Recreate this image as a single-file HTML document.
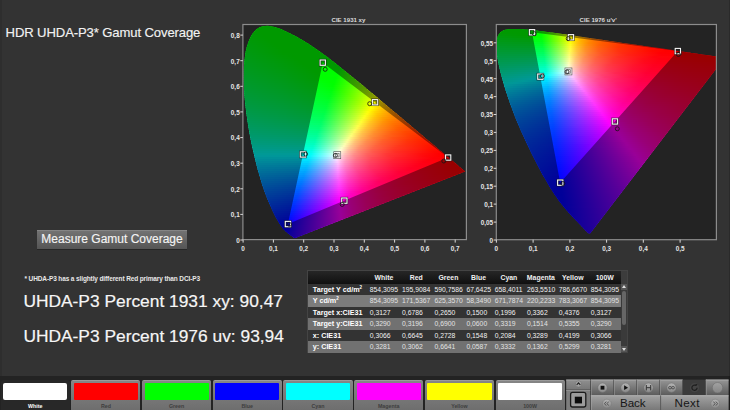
<!DOCTYPE html>
<html lang="en">
<head>
<meta charset="utf-8">
<title>HDR UHDA-P3 Gamut Coverage</title>
<style>
html,body{margin:0;padding:0;}
body{width:730px;height:410px;overflow:hidden;background:#333333;position:relative;font-family:"Liberation Sans",sans-serif;color:#fff;}
.abs{position:absolute;white-space:nowrap;}
.edgeL{left:0;top:0;width:1.5px;height:410px;background:#2e2e2e;}
.edgeR{left:728.5px;top:0;width:1.5px;height:410px;background:#2a2a2a;}
.title{left:5.6px;top:24px;font-size:13.1px;line-height:18px;color:#f2f2f2;letter-spacing:-.12px;-webkit-text-stroke:.15px #f2f2f2;}
.charts{position:absolute;left:0;top:0;}
.charts .ax line{stroke:#d8d8d8;stroke-width:1;}
.charts .ax text{font-family:"Liberation Sans",sans-serif;font-size:6.4px;font-weight:bold;fill:#e6e6e6;}
.charts .ct{font-family:"Liberation Sans",sans-serif;font-size:6.1px;font-weight:bold;fill:#dcdcdc;}
.btn{left:37px;top:230px;width:150px;height:19px;background:linear-gradient(#747474,#555);box-shadow:inset 0 1px 0 #858585,0 1px 0 #262626;text-align:center;font-size:12px;line-height:19px;color:#f4f4f4;-webkit-text-stroke:.15px #f4f4f4;}
.note{left:24.5px;top:273.5px;font-size:6.5px;line-height:10px;font-weight:bold;color:#e8e8e8;letter-spacing:-.12px;}
.big{left:23.4px;font-size:17.36px;line-height:24px;color:#f6f6f6;-webkit-text-stroke:.2px #f6f6f6;}
.b1{top:288.7px;}
.b2{top:324.2px;}
/* table */
.tbl{left:307px;top:270.2px;width:321px;height:82.4px;background:#3c3c3c;border:1px solid #444;box-sizing:border-box;}
.tbl .hd{position:absolute;left:0;top:0;width:313px;height:12.4px;background:linear-gradient(#262626,#101010);}
.tbl .row{position:absolute;left:0;width:313px;height:11.5px;}
.tbl .d{background:#333;}
.tbl .l1{background:#7c7c7c;}
.tbl .l2{background:#717171;}
.tbl span{position:absolute;top:0;font-size:6.8px;line-height:11.5px;color:#f0f0f0;}
.tbl .hd span{font-weight:bold;line-height:13.4px;font-size:6.9px;text-align:center;}
.tbl .row span.lb{left:4.8px;font-weight:bold;font-size:7.2px;color:#fff;}
.tbl .row span.v{text-align:left;}
.tbl .l1 span.v,.tbl .l2 span.v{color:#e2e2e2;}
.tbl sup{font-size:4.5px;line-height:0;vertical-align:3px;}
.sb{position:absolute;left:313px;top:12.4px;width:6px;height:68px;background:#3a3a3a;}
.sb i{position:absolute;left:1px;top:7px;width:4px;height:34px;background:#666;border-radius:2px;}
.sb b{position:absolute;left:0;width:6px;height:6px;background:#555;font-size:0;}
.sb b:after{content:"";position:absolute;left:1px;border:2px solid transparent;}
.sb b.u{top:0;}
.sb b.u:after{top:-1px;border-bottom:3px solid #ddd;}
.sb b.dn{bottom:0;}
.sb b.dn:after{top:2px;border-top:3px solid #ddd;}
/* bottom bar */
.bar{left:0;top:376px;width:730px;height:34px;background:#232323;}
.sw{position:absolute;top:3.6px;width:69.2px;height:30px;background:linear-gradient(#858585,#6e6e6e);border-top:1px solid #9a9a9a;box-sizing:border-box;border-radius:2px 2px 0 0;}
.sw i{position:absolute;left:2.6px;top:2.2px;width:64.2px;height:17.6px;display:block;border-radius:1px;}
.sw span{position:absolute;left:0;width:69.2px;top:21px;text-align:center;font-size:5.3px;line-height:8px;color:#3e3e3e;font-weight:bold;}
.sw.sel{background:#282828;border-top-color:#282828;}
.sw.sel i{border-radius:2px;}
.sw.sel span{color:#fff;font-weight:bold;}
.tb{position:absolute;background:linear-gradient(#8a8a8a,#6c6c6c);box-sizing:border-box;border-left:1px solid #9a9a9a;border-top:1px solid #9c9c9c;}
</style>
</head>
<body>
<div class="abs edgeL"></div>
<div class="abs edgeR"></div>
<div class="abs title">HDR UHDA-P3* Gamut Coverage</div>
<svg class="charts" width="730" height="262" viewBox="0 0 730 262">
<rect x="242.9" y="24.5" width="223.5" height="215.1" fill="#232323"/>
<defs>
<clipPath id="ap"><rect x="243.4" y="25" width="223" height="214.6"/></clipPath>
<clipPath id="ah"><path d="M295.3,238.1 295.2,238.1 295.2,238.1 295.1,238.2 295.1,238.2 295,238.2 295,238.2 294.9,238.2 294.9,238.2 294.8,238.2 294.8,238.2 294.7,238.2 294.7,238.2 294.6,238.1 294.5,238.1 294.4,238.1 294.4,238.1 294.3,238 294.2,238 294.2,238 294.1,237.9 294,237.9 293.9,237.8 293.9,237.8 293.8,237.7 293.7,237.6 293.6,237.6 293.5,237.5 293.3,237.4 293.2,237.3 293.1,237.2 292.9,237.1 292.8,237 292.6,236.9 292.5,236.7 292.3,236.6 292.1,236.5 291.9,236.3 291.8,236.2 291.5,236 291.3,235.9 291.1,235.7 290.8,235.5 290.5,235.3 290.2,235.1 289.9,234.9 289.6,234.6 289.3,234.4 289,234.1 288.6,233.9 288.3,233.6 287.9,233.3 287.5,232.9 287,232.6 286.6,232.2 286.1,231.8 285.7,231.4 285.2,230.9 284.7,230.4 284.1,229.8 283.6,229.2 282.9,228.4 282.3,227.6 281.6,226.7 280.9,225.7 280.1,224.6 279.3,223.4 278.5,222 277.6,220.6 276.7,219 275.7,217.2 274.7,215.2 273.6,213.1 272.5,210.7 271.4,208.2 270.2,205.4 268.9,202.4 267.5,199.2 266.1,195.7 264.7,192 263.3,188 261.9,183.7 260.5,179.1 259.1,174.3 257.6,169.2 256.3,163.9 254.9,158.2 253.5,152.3 252.1,146.2 250.8,140 249.6,133.7 248.5,127.4 247.5,120.9 246.5,114.3 245.7,107.8 245,101.5 244.4,95.3 244,89.2 243.7,83.1 243.6,77.3 243.7,71.7 243.9,66.3 244.4,61.1 245,56.2 245.7,51.5 246.7,47.3 247.9,43.4 249.3,39.8 250.8,36.6 252.5,33.8 254.3,31.4 256.2,29.6 258.3,28.1 260.5,27.1 262.7,26.3 265,25.9 267.3,25.7 269.7,25.9 272.2,26.4 274.7,27.1 277.1,27.8 279.6,28.6 282,29.6 284.5,30.7 287,31.9 289.4,33 291.7,34.2 294.1,35.4 296.4,36.6 298.7,37.9 300.9,39.2 303.2,40.6 305.4,41.9 307.7,43.3 309.9,44.8 312.1,46.2 314.3,47.7 316.5,49.2 318.7,50.8 320.9,52.3 323,53.9 325.2,55.5 327.4,57.1 329.6,58.8 331.7,60.4 333.9,62.1 336,63.8 338.2,65.5 340.4,67.2 342.5,68.9 344.7,70.7 346.9,72.4 349,74.2 351.2,75.9 353.4,77.7 355.5,79.5 357.7,81.2 359.9,83 362,84.8 364.2,86.6 366.3,88.4 368.5,90.2 370.6,92 372.8,93.8 374.9,95.6 377.1,97.3 379.2,99.1 381.3,100.9 383.4,102.7 385.5,104.4 387.6,106.2 389.6,107.9 391.7,109.7 393.7,111.4 395.8,113.1 397.8,114.8 399.8,116.5 401.8,118.1 403.7,119.8 405.7,121.4 407.6,123 409.5,124.6 411.3,126.2 413.2,127.7 415,129.3 416.8,130.8 418.5,132.2 420.3,133.7 421.9,135.1 423.6,136.5 425.2,137.9 426.7,139.2 428.2,140.4 429.7,141.6 431.1,142.8 432.5,144 433.8,145.1 435.2,146.3 436.5,147.3 437.7,148.4 438.9,149.4 440.1,150.4 441.2,151.3 442.2,152.2 443.3,153 444.2,153.9 445.2,154.7 446.1,155.4 446.9,156.2 447.8,156.9 448.6,157.5 449.3,158.2 450,158.8 450.7,159.4 451.4,159.9 452,160.4 452.6,161 453.2,161.4 453.8,161.9 454.3,162.3 454.8,162.7 455.2,163.1 455.7,163.5 456.1,163.8 456.5,164.2 457,164.6 457.6,165.1 458.3,165.7 459,166.4 459.7,166.9 460.4,167.5 460.9,167.9 461.3,168.3 461.8,168.6 462.1,168.9 462.5,169.2 462.8,169.5 463,169.7 463.2,169.9 463.4,170 463.7,170.3 464,170.5 464.3,170.8 464.6,171.1 464.9,171.3 465.1,171.5Z"/></clipPath>
<linearGradient id="ag0" gradientUnits="userSpaceOnUse" x1="259" x2="276"><stop offset="0" stop-color="#0f0"/><stop offset="1" stop-color="#0f0"/></linearGradient>
<linearGradient id="ag1" gradientUnits="userSpaceOnUse" x1="256" x2="282"><stop offset="0" stop-color="#0f0"/><stop offset="1" stop-color="#0f0"/></linearGradient>
<linearGradient id="ag2" gradientUnits="userSpaceOnUse" x1="253" x2="287"><stop offset="0" stop-color="#0f0"/><stop offset="1" stop-color="#0f0"/></linearGradient>
<linearGradient id="ag3" gradientUnits="userSpaceOnUse" x1="252" x2="291"><stop offset="0" stop-color="#00ff01"/><stop offset="1" stop-color="#0f0"/></linearGradient>
<linearGradient id="ag4" gradientUnits="userSpaceOnUse" x1="250" x2="295"><stop offset="0" stop-color="#00ff05"/><stop offset="0.333" stop-color="#0f0"/><stop offset="1" stop-color="#0f0"/></linearGradient>
<linearGradient id="ag5" gradientUnits="userSpaceOnUse" x1="249" x2="299"><stop offset="0" stop-color="#00ff09"/><stop offset="0.32" stop-color="#0f0"/><stop offset="1" stop-color="#0f0"/></linearGradient>
<linearGradient id="ag6" gradientUnits="userSpaceOnUse" x1="248" x2="302"><stop offset="0" stop-color="#00ff0c"/><stop offset="0.352" stop-color="#0f0"/><stop offset="1" stop-color="#0f0"/></linearGradient>
<linearGradient id="ag7" gradientUnits="userSpaceOnUse" x1="247" x2="305"><stop offset="0" stop-color="#00ff0f"/><stop offset="0.397" stop-color="#0f0"/><stop offset="1" stop-color="#0f0"/></linearGradient>
<linearGradient id="ag8" gradientUnits="userSpaceOnUse" x1="247" x2="309"><stop offset="0" stop-color="#0f1"/><stop offset="0.419" stop-color="#0f0"/><stop offset="1" stop-color="#0f0"/></linearGradient>
<linearGradient id="ag9" gradientUnits="userSpaceOnUse" x1="246" x2="312"><stop offset="0" stop-color="#00ff14"/><stop offset="0.455" stop-color="#0f0"/><stop offset="1" stop-color="#0f0"/></linearGradient>
<linearGradient id="ag10" gradientUnits="userSpaceOnUse" x1="245" x2="315"><stop offset="0" stop-color="#00ff17"/><stop offset="0.471" stop-color="#0f0"/><stop offset="1" stop-color="#0f0"/></linearGradient>
<linearGradient id="ag11" gradientUnits="userSpaceOnUse" x1="245" x2="318"><stop offset="0" stop-color="#00ff19"/><stop offset="0.493" stop-color="#0f0"/><stop offset="1" stop-color="#0f0"/></linearGradient>
<linearGradient id="ag12" gradientUnits="userSpaceOnUse" x1="244" x2="320"><stop offset="0" stop-color="#00ff1c"/><stop offset="0.526" stop-color="#0f0"/><stop offset="1" stop-color="#0f0"/></linearGradient>
<linearGradient id="ag13" gradientUnits="userSpaceOnUse" x1="244" x2="323"><stop offset="0" stop-color="#00ff1e"/><stop offset="0.506" stop-color="#0f0"/><stop offset="1" stop-color="#0f0"/></linearGradient>
<linearGradient id="ag14" gradientUnits="userSpaceOnUse" x1="244" x2="326"><stop offset="0" stop-color="#00ff21"/><stop offset="0.488" stop-color="#00ff02"/><stop offset="0.976" stop-color="#0f0"/><stop offset="1" stop-color="#0f0"/></linearGradient>
<linearGradient id="ag15" gradientUnits="userSpaceOnUse" x1="243" x2="329"><stop offset="0" stop-color="#00ff24"/><stop offset="0.465" stop-color="#00ff06"/><stop offset="0.605" stop-color="#0f0"/><stop offset="1" stop-color="#0f0"/></linearGradient>
<linearGradient id="ag16" gradientUnits="userSpaceOnUse" x1="243" x2="331"><stop offset="0" stop-color="#00ff26"/><stop offset="0.455" stop-color="#00ff09"/><stop offset="0.602" stop-color="#0f0"/><stop offset="1" stop-color="#0f0"/></linearGradient>
<linearGradient id="ag17" gradientUnits="userSpaceOnUse" x1="243" x2="334"><stop offset="0" stop-color="#00ff29"/><stop offset="0.44" stop-color="#00ff0c"/><stop offset="0.615" stop-color="#0f0"/><stop offset="1" stop-color="#0f0"/></linearGradient>
<linearGradient id="ag18" gradientUnits="userSpaceOnUse" x1="243" x2="337"><stop offset="0" stop-color="#00ff2b"/><stop offset="0.426" stop-color="#00ff0f"/><stop offset="0.628" stop-color="#0f0"/><stop offset="1" stop-color="#0f0"/></linearGradient>
<linearGradient id="ag19" gradientUnits="userSpaceOnUse" x1="243" x2="339"><stop offset="0" stop-color="#00ff2e"/><stop offset="0.417" stop-color="#00ff12"/><stop offset="0.635" stop-color="#0f0"/><stop offset="1" stop-color="#0f0"/></linearGradient>
<linearGradient id="ag20" gradientUnits="userSpaceOnUse" x1="242.9" x2="342"><stop offset="0" stop-color="#00ff30"/><stop offset="0.404" stop-color="#00ff14"/><stop offset="0.646" stop-color="#0f0"/><stop offset="0.979" stop-color="#0f0"/><stop offset="1" stop-color="#0aff00"/></linearGradient>
<linearGradient id="ag21" gradientUnits="userSpaceOnUse" x1="242.9" x2="344"><stop offset="0" stop-color="#0f3"/><stop offset="0.396" stop-color="#00ff17"/><stop offset="0.663" stop-color="#0f0"/><stop offset="0.95" stop-color="#0f0"/><stop offset="1" stop-color="#15ff00"/></linearGradient>
<linearGradient id="ag22" gradientUnits="userSpaceOnUse" x1="242.9" x2="347"><stop offset="0" stop-color="#00ff36"/><stop offset="0.384" stop-color="#00ff1a"/><stop offset="0.672" stop-color="#0f0"/><stop offset="0.922" stop-color="#02ff00"/><stop offset="1" stop-color="#24ff00"/></linearGradient>
<linearGradient id="ag23" gradientUnits="userSpaceOnUse" x1="242.9" x2="349"><stop offset="0" stop-color="#00ff38"/><stop offset="0.377" stop-color="#00ff1d"/><stop offset="0.688" stop-color="#0f0"/><stop offset="0.895" stop-color="#0f0"/><stop offset="1" stop-color="#2fff00"/></linearGradient>
<linearGradient id="ag24" gradientUnits="userSpaceOnUse" x1="242.9" x2="352"><stop offset="0" stop-color="#00ff3b"/><stop offset="0.367" stop-color="#00ff20"/><stop offset="0.697" stop-color="#0f0"/><stop offset="0.862" stop-color="#0f0"/><stop offset="1" stop-color="#3fff00"/></linearGradient>
<linearGradient id="ag25" gradientUnits="userSpaceOnUse" x1="242.9" x2="354"><stop offset="0" stop-color="#00ff3e"/><stop offset="0.36" stop-color="#00ff23"/><stop offset="0.711" stop-color="#0f0"/><stop offset="0.846" stop-color="#02ff00"/><stop offset="1" stop-color="#4bff00"/></linearGradient>
<linearGradient id="ag26" gradientUnits="userSpaceOnUse" x1="242.9" x2="356"><stop offset="0" stop-color="#00ff41"/><stop offset="0.354" stop-color="#00ff26"/><stop offset="0.707" stop-color="#0f0"/><stop offset="0.822" stop-color="#0f0"/><stop offset="1" stop-color="#57ff00"/></linearGradient>
<linearGradient id="ag27" gradientUnits="userSpaceOnUse" x1="242.9" x2="359"><stop offset="0" stop-color="#0f4"/><stop offset="0.345" stop-color="#00ff29"/><stop offset="0.689" stop-color="#00ff03"/><stop offset="0.792" stop-color="#0f0"/><stop offset="1" stop-color="#68ff00"/></linearGradient>
<linearGradient id="ag28" gradientUnits="userSpaceOnUse" x1="242.9" x2="361"><stop offset="0" stop-color="#00ff47"/><stop offset="0.339" stop-color="#00ff2c"/><stop offset="0.677" stop-color="#00ff07"/><stop offset="0.745" stop-color="#0f0"/><stop offset="0.779" stop-color="#02ff00"/><stop offset="1" stop-color="#75ff00"/></linearGradient>
<linearGradient id="ag29" gradientUnits="userSpaceOnUse" x1="242.9" x2="364"><stop offset="0" stop-color="#00ff4a"/><stop offset="0.33" stop-color="#00ff30"/><stop offset="0.661" stop-color="#00ff0b"/><stop offset="0.751" stop-color="#0f0"/><stop offset="1" stop-color="#87ff00"/></linearGradient>
<linearGradient id="ag30" gradientUnits="userSpaceOnUse" x1="242.9" x2="366"><stop offset="0" stop-color="#00ff4d"/><stop offset="0.325" stop-color="#0f3"/><stop offset="0.65" stop-color="#00ff0e"/><stop offset="0.731" stop-color="#00ff02"/><stop offset="1" stop-color="#96ff00"/></linearGradient>
<linearGradient id="ag31" gradientUnits="userSpaceOnUse" x1="242.9" x2="369"><stop offset="0" stop-color="#00ff50"/><stop offset="0.317" stop-color="#00ff36"/><stop offset="0.634" stop-color="#00ff12"/><stop offset="0.714" stop-color="#02ff06"/><stop offset="0.777" stop-color="#28ff00"/><stop offset="1" stop-color="#af0"/></linearGradient>
<linearGradient id="ag32" gradientUnits="userSpaceOnUse" x1="243" x2="371"><stop offset="0" stop-color="#00ff53"/><stop offset="0.312" stop-color="#00ff3a"/><stop offset="0.625" stop-color="#00ff16"/><stop offset="0.695" stop-color="#00ff0b"/><stop offset="0.773" stop-color="#31ff00"/><stop offset="1" stop-color="#baff00"/></linearGradient>
<linearGradient id="ag33" gradientUnits="userSpaceOnUse" x1="243" x2="373"><stop offset="0" stop-color="#00ff56"/><stop offset="0.308" stop-color="#00ff3d"/><stop offset="0.615" stop-color="#00ff1a"/><stop offset="0.677" stop-color="#0f1"/><stop offset="0.785" stop-color="#42ff00"/><stop offset="1" stop-color="#cbff00"/></linearGradient>
<linearGradient id="ag34" gradientUnits="userSpaceOnUse" x1="243" x2="376"><stop offset="0" stop-color="#00ff5a"/><stop offset="0.301" stop-color="#00ff41"/><stop offset="0.602" stop-color="#00ff1e"/><stop offset="0.662" stop-color="#02ff15"/><stop offset="0.789" stop-color="#54ff00"/><stop offset="1" stop-color="#e3ff00"/></linearGradient>
<linearGradient id="ag35" gradientUnits="userSpaceOnUse" x1="243" x2="378"><stop offset="0" stop-color="#00ff5d"/><stop offset="0.296" stop-color="#00ff45"/><stop offset="0.593" stop-color="#0f2"/><stop offset="0.644" stop-color="#00ff1a"/><stop offset="0.8" stop-color="#67ff00"/><stop offset="0.993" stop-color="#f0ff00"/><stop offset="1" stop-color="#f6ff00"/></linearGradient>
<linearGradient id="ag36" gradientUnits="userSpaceOnUse" x1="243" x2="381"><stop offset="0" stop-color="#00ff61"/><stop offset="0.29" stop-color="#00ff48"/><stop offset="0.58" stop-color="#00ff26"/><stop offset="0.623" stop-color="#00ff1f"/><stop offset="0.804" stop-color="#7bff00"/><stop offset="0.978" stop-color="#feff00"/><stop offset="1" stop-color="#ffef00"/></linearGradient>
<linearGradient id="ag37" gradientUnits="userSpaceOnUse" x1="243" x2="383"><stop offset="0" stop-color="#00ff64"/><stop offset="0.286" stop-color="#00ff4c"/><stop offset="0.571" stop-color="#00ff2a"/><stop offset="0.614" stop-color="#02ff24"/><stop offset="0.814" stop-color="#90ff00"/><stop offset="0.957" stop-color="#fffd00"/><stop offset="1" stop-color="#fd0"/></linearGradient>
<linearGradient id="ag38" gradientUnits="userSpaceOnUse" x1="243" x2="385"><stop offset="0" stop-color="#00ff68"/><stop offset="0.282" stop-color="#00ff50"/><stop offset="0.563" stop-color="#00ff2f"/><stop offset="0.599" stop-color="#00ff29"/><stop offset="0.824" stop-color="#a6ff00"/><stop offset="0.93" stop-color="#fdff00"/><stop offset="1" stop-color="#ffcd00"/></linearGradient>
<linearGradient id="ag39" gradientUnits="userSpaceOnUse" x1="244" x2="388"><stop offset="0" stop-color="#00ff6b"/><stop offset="0.278" stop-color="#00ff54"/><stop offset="0.556" stop-color="#00ff32"/><stop offset="0.576" stop-color="#00ff2f"/><stop offset="0.799" stop-color="#a7ff03"/><stop offset="0.903" stop-color="#fffe00"/><stop offset="0.979" stop-color="#ffc600"/><stop offset="1" stop-color="#ffba00"/></linearGradient>
<linearGradient id="ag40" gradientUnits="userSpaceOnUse" x1="244" x2="390"><stop offset="0" stop-color="#00ff6f"/><stop offset="0.274" stop-color="#00ff58"/><stop offset="0.548" stop-color="#00ff37"/><stop offset="0.568" stop-color="#02ff33"/><stop offset="0.795" stop-color="#b4ff07"/><stop offset="0.836" stop-color="#d7ff00"/><stop offset="0.877" stop-color="#fcff00"/><stop offset="0.966" stop-color="#ffbf00"/><stop offset="1" stop-color="#ffac00"/></linearGradient>
<linearGradient id="ag41" gradientUnits="userSpaceOnUse" x1="244" x2="392"><stop offset="0" stop-color="#00ff73"/><stop offset="0.27" stop-color="#00ff5c"/><stop offset="0.541" stop-color="#00ff3b"/><stop offset="0.554" stop-color="#00ff39"/><stop offset="0.791" stop-color="#c1ff0b"/><stop offset="0.845" stop-color="#f2ff00"/><stop offset="0.858" stop-color="#ff0"/><stop offset="0.932" stop-color="#ffc500"/><stop offset="1" stop-color="#ffa000"/></linearGradient>
<linearGradient id="ag42" gradientUnits="userSpaceOnUse" x1="244" x2="395"><stop offset="0" stop-color="#0f7"/><stop offset="0.265" stop-color="#00ff61"/><stop offset="0.53" stop-color="#00ff40"/><stop offset="0.543" stop-color="#04ff3e"/><stop offset="0.775" stop-color="#c9ff11"/><stop offset="0.834" stop-color="#fffc00"/><stop offset="0.907" stop-color="#ffc200"/><stop offset="1" stop-color="#ff9100"/></linearGradient>
<linearGradient id="ag43" gradientUnits="userSpaceOnUse" x1="245" x2="397"><stop offset="0" stop-color="#00ff7b"/><stop offset="0.263" stop-color="#00ff65"/><stop offset="0.526" stop-color="#02ff44"/><stop offset="0.757" stop-color="#caff18"/><stop offset="0.809" stop-color="#feff0a"/><stop offset="0.855" stop-color="#ffd700"/><stop offset="0.941" stop-color="#ffa100"/><stop offset="1" stop-color="#ff8700"/></linearGradient>
<linearGradient id="ag44" gradientUnits="userSpaceOnUse" x1="245" x2="400"><stop offset="0" stop-color="#00ff80"/><stop offset="0.258" stop-color="#00ff69"/><stop offset="0.51" stop-color="#00ff4b"/><stop offset="0.735" stop-color="#ccff20"/><stop offset="0.787" stop-color="#fffd12"/><stop offset="0.852" stop-color="#ffc500"/><stop offset="0.942" stop-color="#ff9200"/><stop offset="1" stop-color="#ff7a00"/></linearGradient>
<linearGradient id="ag45" gradientUnits="userSpaceOnUse" x1="245" x2="402"><stop offset="0" stop-color="#00ff84"/><stop offset="0.255" stop-color="#00ff6e"/><stop offset="0.497" stop-color="#00ff51"/><stop offset="0.701" stop-color="#bbff2c"/><stop offset="0.764" stop-color="#fdff1c"/><stop offset="0.841" stop-color="#ffbe03"/><stop offset="0.936" stop-color="#ff8a00"/><stop offset="1" stop-color="#ff7100"/></linearGradient>
<linearGradient id="ag46" gradientUnits="userSpaceOnUse" x1="245" x2="404"><stop offset="0" stop-color="#00ff89"/><stop offset="0.252" stop-color="#00ff73"/><stop offset="0.491" stop-color="#02ff56"/><stop offset="0.698" stop-color="#c9ff30"/><stop offset="0.748" stop-color="#fffe24"/><stop offset="0.811" stop-color="#ffc40e"/><stop offset="0.868" stop-color="#ffa000"/><stop offset="0.981" stop-color="#ff6f00"/><stop offset="1" stop-color="#ff6900"/></linearGradient>
<linearGradient id="ag47" gradientUnits="userSpaceOnUse" x1="246" x2="407"><stop offset="0" stop-color="#00ff8d"/><stop offset="0.248" stop-color="#00ff78"/><stop offset="0.472" stop-color="#00ff5d"/><stop offset="0.677" stop-color="#cbff38"/><stop offset="0.72" stop-color="#fcff2e"/><stop offset="0.795" stop-color="#ffbd12"/><stop offset="0.87" stop-color="#ff9000"/><stop offset="0.994" stop-color="#ff6000"/><stop offset="1" stop-color="#ff5f00"/></linearGradient>
<linearGradient id="ag48" gradientUnits="userSpaceOnUse" x1="246" x2="409"><stop offset="0" stop-color="#00ff92"/><stop offset="0.245" stop-color="#00ff7d"/><stop offset="0.46" stop-color="#00ff64"/><stop offset="0.644" stop-color="#b9ff44"/><stop offset="0.706" stop-color="#ffff36"/><stop offset="0.761" stop-color="#ffc81f"/><stop offset="0.84" stop-color="#ff9407"/><stop offset="0.89" stop-color="#ff7d00"/><stop offset="1" stop-color="#ff5700"/></linearGradient>
<linearGradient id="ag49" gradientUnits="userSpaceOnUse" x1="246" x2="411"><stop offset="0" stop-color="#00ff97"/><stop offset="0.242" stop-color="#00ff83"/><stop offset="0.455" stop-color="#02ff6a"/><stop offset="0.642" stop-color="#c8ff4a"/><stop offset="0.691" stop-color="#fffc3e"/><stop offset="0.745" stop-color="#ffc526"/><stop offset="0.824" stop-color="#ff910d"/><stop offset="0.891" stop-color="#ff7300"/><stop offset="1" stop-color="#ff5000"/></linearGradient>
<linearGradient id="ag50" gradientUnits="userSpaceOnUse" x1="247" x2="414"><stop offset="0" stop-color="#00ff9b"/><stop offset="0.24" stop-color="#0f8"/><stop offset="0.437" stop-color="#00ff72"/><stop offset="0.623" stop-color="#caff52"/><stop offset="0.665" stop-color="#feff49"/><stop offset="0.725" stop-color="#ffc22c"/><stop offset="0.802" stop-color="#ff8e13"/><stop offset="0.892" stop-color="#ff6700"/><stop offset="1" stop-color="#ff4700"/></linearGradient>
<linearGradient id="ag51" gradientUnits="userSpaceOnUse" x1="247" x2="416"><stop offset="0" stop-color="#00ffa1"/><stop offset="0.237" stop-color="#00ff8e"/><stop offset="0.426" stop-color="#00ff79"/><stop offset="0.592" stop-color="#b7ff5f"/><stop offset="0.651" stop-color="#fffc51"/><stop offset="0.704" stop-color="#ffc435"/><stop offset="0.781" stop-color="#ff8e1a"/><stop offset="0.893" stop-color="#ff5e00"/><stop offset="1" stop-color="#ff4100"/></linearGradient>
<linearGradient id="ag52" gradientUnits="userSpaceOnUse" x1="247" x2="419"><stop offset="0" stop-color="#00ffa6"/><stop offset="0.233" stop-color="#00ff95"/><stop offset="0.419" stop-color="#01ff80"/><stop offset="0.587" stop-color="#c7ff65"/><stop offset="0.628" stop-color="#fdff5d"/><stop offset="0.686" stop-color="#ffc03c"/><stop offset="0.762" stop-color="#ff8b1f"/><stop offset="0.872" stop-color="#ff5c03"/><stop offset="1" stop-color="#ff3a00"/></linearGradient>
<linearGradient id="ag53" gradientUnits="userSpaceOnUse" x1="248" x2="421"><stop offset="0" stop-color="#00ffab"/><stop offset="0.231" stop-color="#00ff9b"/><stop offset="0.405" stop-color="#0f8"/><stop offset="0.566" stop-color="#c2ff70"/><stop offset="0.613" stop-color="#fffd66"/><stop offset="0.659" stop-color="#ffc848"/><stop offset="0.728" stop-color="#ff932a"/><stop offset="0.827" stop-color="#ff630f"/><stop offset="0.908" stop-color="#ff4900"/><stop offset="1" stop-color="#ff3400"/></linearGradient>
<linearGradient id="ag54" gradientUnits="userSpaceOnUse" x1="248" x2="423"><stop offset="0" stop-color="#00ffb1"/><stop offset="0.229" stop-color="#00ffa1"/><stop offset="0.394" stop-color="#00ff91"/><stop offset="0.543" stop-color="#b5ff7b"/><stop offset="0.594" stop-color="#fcff72"/><stop offset="0.651" stop-color="#ffbf4c"/><stop offset="0.72" stop-color="#ff8c2e"/><stop offset="0.823" stop-color="#ff5c11"/><stop offset="0.914" stop-color="#ff4100"/><stop offset="1" stop-color="#ff2e00"/></linearGradient>
<linearGradient id="ag55" gradientUnits="userSpaceOnUse" x1="248" x2="426"><stop offset="0" stop-color="#00ffb7"/><stop offset="0.225" stop-color="#00ffa8"/><stop offset="0.388" stop-color="#01ff99"/><stop offset="0.545" stop-color="#ceff82"/><stop offset="0.579" stop-color="#ffff7c"/><stop offset="0.624" stop-color="#ffc75a"/><stop offset="0.685" stop-color="#ff943a"/><stop offset="0.775" stop-color="#ff651c"/><stop offset="0.916" stop-color="#ff3900"/><stop offset="1" stop-color="#ff2800"/></linearGradient>
<linearGradient id="ag56" gradientUnits="userSpaceOnUse" x1="249" x2="428"><stop offset="0" stop-color="#00ffbd"/><stop offset="0.223" stop-color="#00ffaf"/><stop offset="0.374" stop-color="#00ffa2"/><stop offset="0.52" stop-color="#c0ff8f"/><stop offset="0.559" stop-color="#faff88"/><stop offset="0.575" stop-color="#ffeb7b"/><stop offset="0.626" stop-color="#ffb356"/><stop offset="0.698" stop-color="#ff7f34"/><stop offset="0.804" stop-color="#ff5115"/><stop offset="0.922" stop-color="#ff3200"/><stop offset="1" stop-color="#f20"/></linearGradient>
<linearGradient id="ag57" gradientUnits="userSpaceOnUse" x1="249" x2="430"><stop offset="0" stop-color="#00ffc4"/><stop offset="0.221" stop-color="#00ffb7"/><stop offset="0.365" stop-color="#00ffab"/><stop offset="0.464" stop-color="#83ffa0"/><stop offset="0.547" stop-color="#feff94"/><stop offset="0.591" stop-color="#ffc56c"/><stop offset="0.652" stop-color="#ff9148"/><stop offset="0.74" stop-color="#ff6127"/><stop offset="0.873" stop-color="#ff3708"/><stop offset="0.939" stop-color="#ff2800"/><stop offset="1" stop-color="#ff1d00"/></linearGradient>
<linearGradient id="ag58" gradientUnits="userSpaceOnUse" x1="250" x2="433"><stop offset="0" stop-color="#00ffca"/><stop offset="0.219" stop-color="#00ffbf"/><stop offset="0.355" stop-color="#01ffb4"/><stop offset="0.497" stop-color="#cdffa4"/><stop offset="0.53" stop-color="#fffc9e"/><stop offset="0.574" stop-color="#ffc174"/><stop offset="0.634" stop-color="#ff8d4e"/><stop offset="0.721" stop-color="#ff5e2c"/><stop offset="0.858" stop-color="#ff330b"/><stop offset="0.934" stop-color="#ff2300"/><stop offset="1" stop-color="#ff1800"/></linearGradient>
<linearGradient id="ag59" gradientUnits="userSpaceOnUse" x1="250" x2="435"><stop offset="0" stop-color="#00ffd1"/><stop offset="0.216" stop-color="#00ffc7"/><stop offset="0.346" stop-color="#00ffbe"/><stop offset="0.476" stop-color="#beffb1"/><stop offset="0.514" stop-color="#fdffad"/><stop offset="0.562" stop-color="#ffbe7b"/><stop offset="0.622" stop-color="#ff8a54"/><stop offset="0.708" stop-color="#ff5b30"/><stop offset="0.843" stop-color="#ff310f"/><stop offset="0.941" stop-color="#ff1d00"/><stop offset="1" stop-color="#ff1300"/></linearGradient>
<linearGradient id="ag60" gradientUnits="userSpaceOnUse" x1="250" x2="438"><stop offset="0" stop-color="#00ffd9"/><stop offset="0.213" stop-color="#00ffd0"/><stop offset="0.335" stop-color="#00ffc9"/><stop offset="0.351" stop-color="#15ffc7"/><stop offset="0.463" stop-color="#c0ffbe"/><stop offset="0.5" stop-color="#fffdb8"/><stop offset="0.537" stop-color="#ffc68d"/><stop offset="0.59" stop-color="#ff9263"/><stop offset="0.67" stop-color="#ff623d"/><stop offset="0.793" stop-color="#ff3619"/><stop offset="0.936" stop-color="#ff1800"/><stop offset="1" stop-color="#ff0d00"/></linearGradient>
<linearGradient id="ag61" gradientUnits="userSpaceOnUse" x1="251" x2="440"><stop offset="0" stop-color="#00ffe0"/><stop offset="0.212" stop-color="#00ffd9"/><stop offset="0.328" stop-color="#01ffd3"/><stop offset="0.455" stop-color="#ccffca"/><stop offset="0.481" stop-color="#fbffc8"/><stop offset="0.519" stop-color="#ffc99a"/><stop offset="0.571" stop-color="#ff936d"/><stop offset="0.646" stop-color="#ff6446"/><stop offset="0.762" stop-color="#ff3821"/><stop offset="0.942" stop-color="#ff1200"/><stop offset="1" stop-color="#ff0900"/></linearGradient>
<linearGradient id="ag62" gradientUnits="userSpaceOnUse" x1="251" x2="442"><stop offset="0" stop-color="#00ffe8"/><stop offset="0.209" stop-color="#00ffe3"/><stop offset="0.319" stop-color="#00ffdf"/><stop offset="0.435" stop-color="#bcffd9"/><stop offset="0.471" stop-color="#fffed6"/><stop offset="0.508" stop-color="#ffc4a3"/><stop offset="0.56" stop-color="#ff8f74"/><stop offset="0.634" stop-color="#ff604b"/><stop offset="0.749" stop-color="#ff3524"/><stop offset="0.942" stop-color="#ff0d00"/><stop offset="1" stop-color="#ff0400"/></linearGradient>
<linearGradient id="ag63" gradientUnits="userSpaceOnUse" x1="252" x2="445"><stop offset="0" stop-color="#00fff0"/><stop offset="0.207" stop-color="#00ffed"/><stop offset="0.306" stop-color="#00ffeb"/><stop offset="0.316" stop-color="#0effea"/><stop offset="0.42" stop-color="#beffe7"/><stop offset="0.451" stop-color="#faffe6"/><stop offset="0.461" stop-color="#fff0d8"/><stop offset="0.497" stop-color="#ffbaa6"/><stop offset="0.549" stop-color="#ff8777"/><stop offset="0.627" stop-color="#ff584b"/><stop offset="0.746" stop-color="#ff2e24"/><stop offset="0.943" stop-color="#ff0700"/><stop offset="1" stop-color="#f00"/></linearGradient>
<linearGradient id="ag64" gradientUnits="userSpaceOnUse" x1="252" x2="447"><stop offset="0" stop-color="#00fff9"/><stop offset="0.205" stop-color="#00fff8"/><stop offset="0.303" stop-color="#00fff7"/><stop offset="0.415" stop-color="#cafff6"/><stop offset="0.441" stop-color="#fefff6"/><stop offset="0.477" stop-color="#ffc3bb"/><stop offset="0.523" stop-color="#ff908a"/><stop offset="0.59" stop-color="#ff625d"/><stop offset="0.692" stop-color="#ff3734"/><stop offset="0.867" stop-color="#ff0f0c"/><stop offset="0.959" stop-color="#f00"/><stop offset="1" stop-color="#f00"/></linearGradient>
<linearGradient id="ag65" gradientUnits="userSpaceOnUse" x1="253" x2="449"><stop offset="0" stop-color="#00fcff"/><stop offset="0.204" stop-color="#00fbff"/><stop offset="0.291" stop-color="#00faff"/><stop offset="0.398" stop-color="#bef8ff"/><stop offset="0.429" stop-color="#fcf8ff"/><stop offset="0.469" stop-color="#ffb7bd"/><stop offset="0.515" stop-color="#ff878c"/><stop offset="0.587" stop-color="#ff595d"/><stop offset="0.694" stop-color="#ff3033"/><stop offset="0.878" stop-color="#ff080b"/><stop offset="0.949" stop-color="#f00"/><stop offset="1" stop-color="#f00"/></linearGradient>
<linearGradient id="ag66" gradientUnits="userSpaceOnUse" x1="253" x2="452"><stop offset="0" stop-color="#00f3ff"/><stop offset="0.201" stop-color="#00efff"/><stop offset="0.281" stop-color="#00edff"/><stop offset="0.291" stop-color="#0eedff"/><stop offset="0.392" stop-color="#bfe9ff"/><stop offset="0.422" stop-color="#fbe8ff"/><stop offset="0.437" stop-color="#ffd0e6"/><stop offset="0.472" stop-color="#ffa1b3"/><stop offset="0.523" stop-color="#ff7483"/><stop offset="0.598" stop-color="#ff4955"/><stop offset="0.719" stop-color="#ff222b"/><stop offset="0.905" stop-color="#ff0007"/><stop offset="0.98" stop-color="#f00"/><stop offset="1" stop-color="#f00"/></linearGradient>
<linearGradient id="ag67" gradientUnits="userSpaceOnUse" x1="254" x2="454"><stop offset="0" stop-color="#00eaff"/><stop offset="0.2" stop-color="#00e4ff"/><stop offset="0.275" stop-color="#00e1ff"/><stop offset="0.39" stop-color="#c9daff"/><stop offset="0.415" stop-color="#fad9ff"/><stop offset="0.425" stop-color="#ffccf1"/><stop offset="0.46" stop-color="#ff9cbb"/><stop offset="0.51" stop-color="#ff7089"/><stop offset="0.585" stop-color="#ff465a"/><stop offset="0.7" stop-color="#ff2030"/><stop offset="0.87" stop-color="#ff000d"/><stop offset="0.975" stop-color="#f00"/><stop offset="1" stop-color="#f00"/></linearGradient>
<linearGradient id="ag68" gradientUnits="userSpaceOnUse" x1="254" x2="457"><stop offset="0" stop-color="#00e2ff"/><stop offset="0.197" stop-color="#00daff"/><stop offset="0.266" stop-color="#00d6ff"/><stop offset="0.379" stop-color="#c0cdff"/><stop offset="0.409" stop-color="#f9caff"/><stop offset="0.414" stop-color="#ffc7fb"/><stop offset="0.448" stop-color="#ff98c4"/><stop offset="0.498" stop-color="#ff6c90"/><stop offset="0.567" stop-color="#ff4562"/><stop offset="0.675" stop-color="#ff2037"/><stop offset="0.837" stop-color="#ff0012"/><stop offset="0.97" stop-color="#f00"/><stop offset="1" stop-color="#f00"/></linearGradient>
<linearGradient id="ag69" gradientUnits="userSpaceOnUse" x1="255" x2="459"><stop offset="0" stop-color="#00d9ff"/><stop offset="0.196" stop-color="#00cfff"/><stop offset="0.255" stop-color="#00cbff"/><stop offset="0.265" stop-color="#0ccaff"/><stop offset="0.373" stop-color="#c1c0ff"/><stop offset="0.407" stop-color="#ffbafc"/><stop offset="0.441" stop-color="#ff8ec6"/><stop offset="0.49" stop-color="#ff6492"/><stop offset="0.564" stop-color="#ff3d62"/><stop offset="0.676" stop-color="#ff1936"/><stop offset="0.809" stop-color="#ff0018"/><stop offset="0.975" stop-color="#f00"/><stop offset="1" stop-color="#f00"/></linearGradient>
<linearGradient id="ag70" gradientUnits="userSpaceOnUse" x1="255" x2="461"><stop offset="0" stop-color="#00d1ff"/><stop offset="0.194" stop-color="#00c5ff"/><stop offset="0.252" stop-color="#00c0ff"/><stop offset="0.374" stop-color="#cab2ff"/><stop offset="0.403" stop-color="#ffadfe"/><stop offset="0.437" stop-color="#ff84c8"/><stop offset="0.485" stop-color="#ff5d94"/><stop offset="0.558" stop-color="#ff3764"/><stop offset="0.67" stop-color="#ff1538"/><stop offset="0.782" stop-color="#ff001d"/><stop offset="0.976" stop-color="#f00"/><stop offset="1" stop-color="#f00"/></linearGradient>
<linearGradient id="ag71" gradientUnits="userSpaceOnUse" x1="256" x2="464"><stop offset="0" stop-color="#00c9ff"/><stop offset="0.192" stop-color="#0bf"/><stop offset="0.24" stop-color="#00b6ff"/><stop offset="0.356" stop-color="#b9a8ff"/><stop offset="0.394" stop-color="#ffa1ff"/><stop offset="0.428" stop-color="#ff7ac9"/><stop offset="0.476" stop-color="#ff5596"/><stop offset="0.548" stop-color="#ff3266"/><stop offset="0.659" stop-color="#ff103a"/><stop offset="0.745" stop-color="#ff0024"/><stop offset="0.938" stop-color="#ff0004"/><stop offset="1" stop-color="#f00"/></linearGradient>
<linearGradient id="ag72" gradientUnits="userSpaceOnUse" x1="256" x2="466"><stop offset="0" stop-color="#00c2ff"/><stop offset="0.19" stop-color="#00b2ff"/><stop offset="0.238" stop-color="#03acff"/><stop offset="0.362" stop-color="#ca9aff"/><stop offset="0.39" stop-color="#fe95ff"/><stop offset="0.429" stop-color="#ff6dc5"/><stop offset="0.481" stop-color="#ff4991"/><stop offset="0.557" stop-color="#ff2761"/><stop offset="0.671" stop-color="#ff0837"/><stop offset="0.724" stop-color="#ff002a"/><stop offset="0.914" stop-color="#ff0008"/><stop offset="1" stop-color="#f00"/></linearGradient>
<linearGradient id="ag73" gradientUnits="userSpaceOnUse" x1="257" x2="466"><stop offset="0" stop-color="#00baff"/><stop offset="0.191" stop-color="#00a8ff"/><stop offset="0.23" stop-color="#00a3ff"/><stop offset="0.359" stop-color="#cb8fff"/><stop offset="0.388" stop-color="#fd89ff"/><stop offset="0.431" stop-color="#ff60c1"/><stop offset="0.483" stop-color="#ff3f8f"/><stop offset="0.56" stop-color="#ff2061"/><stop offset="0.679" stop-color="#ff0136"/><stop offset="0.871" stop-color="#ff0010"/><stop offset="1" stop-color="#f00"/></linearGradient>
<linearGradient id="ag74" gradientUnits="userSpaceOnUse" x1="257" x2="463"><stop offset="0" stop-color="#00b2ff"/><stop offset="0.194" stop-color="#009fff"/><stop offset="0.228" stop-color="#009bff"/><stop offset="0.354" stop-color="#bb86ff"/><stop offset="0.393" stop-color="#fc7eff"/><stop offset="0.442" stop-color="#ff55bd"/><stop offset="0.5" stop-color="#ff348a"/><stop offset="0.587" stop-color="#ff155a"/><stop offset="0.684" stop-color="#ff003a"/><stop offset="0.879" stop-color="#ff0012"/><stop offset="1" stop-color="#ff0001"/></linearGradient>
<linearGradient id="ag75" gradientUnits="userSpaceOnUse" x1="258" x2="458"><stop offset="0" stop-color="#00abff"/><stop offset="0.2" stop-color="#0096ff"/><stop offset="0.23" stop-color="#0392ff"/><stop offset="0.37" stop-color="#cb7aff"/><stop offset="0.4" stop-color="#fc73ff"/><stop offset="0.45" stop-color="#ff4dbf"/><stop offset="0.51" stop-color="#ff2e8c"/><stop offset="0.6" stop-color="#ff105c"/><stop offset="0.68" stop-color="#ff0041"/><stop offset="0.87" stop-color="#ff0019"/><stop offset="1" stop-color="#ff0007"/></linearGradient>
<linearGradient id="ag76" gradientUnits="userSpaceOnUse" x1="258" x2="452"><stop offset="0" stop-color="#00a4ff"/><stop offset="0.206" stop-color="#008dff"/><stop offset="0.232" stop-color="#008aff"/><stop offset="0.381" stop-color="#cb6fff"/><stop offset="0.412" stop-color="#fb68ff"/><stop offset="0.428" stop-color="#ff5dec"/><stop offset="0.474" stop-color="#ff3fb7"/><stop offset="0.541" stop-color="#ff2284"/><stop offset="0.639" stop-color="#ff0657"/><stop offset="0.686" stop-color="#ff0047"/><stop offset="0.871" stop-color="#ff001f"/><stop offset="1" stop-color="#ff000c"/></linearGradient>
<linearGradient id="ag77" gradientUnits="userSpaceOnUse" x1="259" x2="447"><stop offset="0" stop-color="#009cff"/><stop offset="0.213" stop-color="#0084ff"/><stop offset="0.229" stop-color="#0082ff"/><stop offset="0.378" stop-color="#bd68ff"/><stop offset="0.426" stop-color="#ff5cfc"/><stop offset="0.473" stop-color="#ff3dc2"/><stop offset="0.537" stop-color="#ff2290"/><stop offset="0.633" stop-color="#ff0660"/><stop offset="0.681" stop-color="#ff0050"/><stop offset="0.856" stop-color="#ff0027"/><stop offset="1" stop-color="#f01"/></linearGradient>
<linearGradient id="ag78" gradientUnits="userSpaceOnUse" x1="260" x2="442"><stop offset="0" stop-color="#0095ff"/><stop offset="0.22" stop-color="#007bff"/><stop offset="0.231" stop-color="#027aff"/><stop offset="0.396" stop-color="#cc5cff"/><stop offset="0.434" stop-color="#ff52fd"/><stop offset="0.484" stop-color="#ff36c4"/><stop offset="0.549" stop-color="#ff1c92"/><stop offset="0.648" stop-color="#ff0062"/><stop offset="0.802" stop-color="#ff0037"/><stop offset="1" stop-color="#ff0016"/></linearGradient>
<linearGradient id="ag79" gradientUnits="userSpaceOnUse" x1="260" x2="437"><stop offset="0" stop-color="#008eff"/><stop offset="0.226" stop-color="#0074ff"/><stop offset="0.232" stop-color="#0073ff"/><stop offset="0.407" stop-color="#cc53ff"/><stop offset="0.446" stop-color="#ff49fe"/><stop offset="0.497" stop-color="#ff2ec5"/><stop offset="0.571" stop-color="#ff1490"/><stop offset="0.655" stop-color="#ff0068"/><stop offset="0.808" stop-color="#ff003c"/><stop offset="1" stop-color="#ff001c"/></linearGradient>
<linearGradient id="ag80" gradientUnits="userSpaceOnUse" x1="261" x2="432"><stop offset="0" stop-color="#0087ff"/><stop offset="0.228" stop-color="#006cff"/><stop offset="0.404" stop-color="#be4cff"/><stop offset="0.456" stop-color="#ff40ff"/><stop offset="0.509" stop-color="#ff27c7"/><stop offset="0.585" stop-color="#ff0e92"/><stop offset="0.649" stop-color="#ff0073"/><stop offset="0.789" stop-color="#ff0047"/><stop offset="1" stop-color="#ff0021"/></linearGradient>
<linearGradient id="ag81" gradientUnits="userSpaceOnUse" x1="261" x2="427"><stop offset="0" stop-color="#0081ff"/><stop offset="0.235" stop-color="#0264ff"/><stop offset="0.428" stop-color="#cc41ff"/><stop offset="0.47" stop-color="#fe37ff"/><stop offset="0.53" stop-color="#ff1dc3"/><stop offset="0.608" stop-color="#ff0691"/><stop offset="0.657" stop-color="#ff007a"/><stop offset="0.795" stop-color="#ff004e"/><stop offset="1" stop-color="#ff0027"/></linearGradient>
<linearGradient id="ag82" gradientUnits="userSpaceOnUse" x1="262" x2="422"><stop offset="0" stop-color="#007aff"/><stop offset="0.231" stop-color="#005eff"/><stop offset="0.438" stop-color="#cd38ff"/><stop offset="0.481" stop-color="#fe2eff"/><stop offset="0.55" stop-color="#ff14c0"/><stop offset="0.631" stop-color="#ff008f"/><stop offset="0.756" stop-color="#ff0060"/><stop offset="0.95" stop-color="#ff0035"/><stop offset="1" stop-color="#ff002d"/></linearGradient>
<linearGradient id="ag83" gradientUnits="userSpaceOnUse" x1="263" x2="417"><stop offset="0" stop-color="#0073ff"/><stop offset="0.227" stop-color="#0058ff"/><stop offset="0.435" stop-color="#c033ff"/><stop offset="0.494" stop-color="#fd25ff"/><stop offset="0.571" stop-color="#ff0bbd"/><stop offset="0.623" stop-color="#ff009e"/><stop offset="0.74" stop-color="#ff006e"/><stop offset="0.916" stop-color="#ff0042"/><stop offset="1" stop-color="#f03"/></linearGradient>
<linearGradient id="ag84" gradientUnits="userSpaceOnUse" x1="264" x2="412"><stop offset="0" stop-color="#006dff"/><stop offset="0.23" stop-color="#0251ff"/><stop offset="0.459" stop-color="#cd28ff"/><stop offset="0.507" stop-color="#fc1cff"/><stop offset="0.588" stop-color="#ff03bf"/><stop offset="0.689" stop-color="#ff008a"/><stop offset="0.838" stop-color="#ff005b"/><stop offset="1" stop-color="#ff003a"/></linearGradient>
<linearGradient id="ag85" gradientUnits="userSpaceOnUse" x1="264" x2="407"><stop offset="0" stop-color="#0067ff"/><stop offset="0.231" stop-color="#004bff"/><stop offset="0.469" stop-color="#c721ff"/><stop offset="0.531" stop-color="#ff12fc"/><stop offset="0.594" stop-color="#ff00c9"/><stop offset="0.692" stop-color="#ff0094"/><stop offset="0.832" stop-color="#ff0065"/><stop offset="1" stop-color="#ff0042"/></linearGradient>
<linearGradient id="ag86" gradientUnits="userSpaceOnUse" x1="265" x2="402"><stop offset="0" stop-color="#0060ff"/><stop offset="0.226" stop-color="#0046ff"/><stop offset="0.467" stop-color="#bb1cff"/><stop offset="0.547" stop-color="#ff09fc"/><stop offset="0.591" stop-color="#ff00d9"/><stop offset="0.686" stop-color="#ff00a3"/><stop offset="0.818" stop-color="#ff0073"/><stop offset="1" stop-color="#ff0049"/></linearGradient>
<linearGradient id="ag87" gradientUnits="userSpaceOnUse" x1="266" x2="396"><stop offset="0" stop-color="#005aff"/><stop offset="0.231" stop-color="#013fff"/><stop offset="0.5" stop-color="#c711ff"/><stop offset="0.569" stop-color="#ff00fd"/><stop offset="0.654" stop-color="#ff00c3"/><stop offset="0.769" stop-color="#ff008f"/><stop offset="0.938" stop-color="#ff0060"/><stop offset="1" stop-color="#ff0053"/></linearGradient>
<linearGradient id="ag88" gradientUnits="userSpaceOnUse" x1="267" x2="391"><stop offset="0" stop-color="#0053ff"/><stop offset="0.226" stop-color="#003aff"/><stop offset="0.5" stop-color="#bc0dff"/><stop offset="0.565" stop-color="#ed00ff"/><stop offset="0.589" stop-color="#ff00fe"/><stop offset="0.677" stop-color="#ff00c4"/><stop offset="0.798" stop-color="#ff0090"/><stop offset="0.976" stop-color="#ff0061"/><stop offset="1" stop-color="#ff005c"/></linearGradient>
<linearGradient id="ag89" gradientUnits="userSpaceOnUse" x1="268" x2="386"><stop offset="0" stop-color="#004dff"/><stop offset="0.22" stop-color="#0035ff"/><stop offset="0.5" stop-color="#b008ff"/><stop offset="0.551" stop-color="#d400ff"/><stop offset="0.61" stop-color="#f0f"/><stop offset="0.703" stop-color="#ff00c5"/><stop offset="0.831" stop-color="#ff0092"/><stop offset="1" stop-color="#f06"/></linearGradient>
<linearGradient id="ag90" gradientUnits="userSpaceOnUse" x1="268" x2="381"><stop offset="0" stop-color="#0047ff"/><stop offset="0.23" stop-color="#012eff"/><stop offset="0.504" stop-color="#a604ff"/><stop offset="0.602" stop-color="#e600ff"/><stop offset="0.637" stop-color="#f0f"/><stop offset="0.735" stop-color="#ff00c7"/><stop offset="0.867" stop-color="#ff0093"/><stop offset="1" stop-color="#ff0071"/></linearGradient>
<linearGradient id="ag91" gradientUnits="userSpaceOnUse" x1="269" x2="376"><stop offset="0" stop-color="#0041ff"/><stop offset="0.224" stop-color="#002aff"/><stop offset="0.523" stop-color="#a700ff"/><stop offset="0.664" stop-color="#fe00ff"/><stop offset="0.776" stop-color="#ff00c4"/><stop offset="0.925" stop-color="#ff0090"/><stop offset="1" stop-color="#ff007d"/></linearGradient>
<linearGradient id="ag92" gradientUnits="userSpaceOnUse" x1="270" x2="371"><stop offset="0" stop-color="#003bff"/><stop offset="0.228" stop-color="#0324ff"/><stop offset="0.495" stop-color="#8d00ff"/><stop offset="0.693" stop-color="#fd00ff"/><stop offset="0.822" stop-color="#ff00c1"/><stop offset="0.99" stop-color="#ff008c"/><stop offset="1" stop-color="#ff008a"/></linearGradient>
<linearGradient id="ag93" gradientUnits="userSpaceOnUse" x1="271" x2="366"><stop offset="0" stop-color="#0034ff"/><stop offset="0.221" stop-color="#011fff"/><stop offset="0.474" stop-color="#7900ff"/><stop offset="0.726" stop-color="#fd00ff"/><stop offset="0.874" stop-color="#ff00be"/><stop offset="1" stop-color="#ff0098"/></linearGradient>
<linearGradient id="ag94" gradientUnits="userSpaceOnUse" x1="272" x2="361"><stop offset="0" stop-color="#002eff"/><stop offset="0.213" stop-color="#001aff"/><stop offset="0.449" stop-color="#6700ff"/><stop offset="0.742" stop-color="#f000ff"/><stop offset="0.775" stop-color="#ff00fc"/><stop offset="0.91" stop-color="#ff00c3"/><stop offset="1" stop-color="#ff00a8"/></linearGradient>
<linearGradient id="ag95" gradientUnits="userSpaceOnUse" x1="273" x2="356"><stop offset="0" stop-color="#0028ff"/><stop offset="0.217" stop-color="#0314ff"/><stop offset="0.41" stop-color="#5100ff"/><stop offset="0.747" stop-color="#df00ff"/><stop offset="0.819" stop-color="#ff00fd"/><stop offset="0.964" stop-color="#ff00c4"/><stop offset="1" stop-color="#ff00b9"/></linearGradient>
<linearGradient id="ag96" gradientUnits="userSpaceOnUse" x1="274" x2="351"><stop offset="0" stop-color="#02f"/><stop offset="0.208" stop-color="#0110ff"/><stop offset="0.377" stop-color="#4000ff"/><stop offset="0.766" stop-color="#d400ff"/><stop offset="0.87" stop-color="#ff00fd"/><stop offset="1" stop-color="#ff00ce"/></linearGradient>
<linearGradient id="ag97" gradientUnits="userSpaceOnUse" x1="275" x2="345"><stop offset="0" stop-color="#001cff"/><stop offset="0.2" stop-color="#000bff"/><stop offset="0.343" stop-color="#3000ff"/><stop offset="0.8" stop-color="#c900ff"/><stop offset="0.943" stop-color="#ff00fe"/><stop offset="1" stop-color="#ff00e9"/></linearGradient>
<linearGradient id="ag98" gradientUnits="userSpaceOnUse" x1="276" x2="340"><stop offset="0" stop-color="#0015ff"/><stop offset="0.203" stop-color="#0205ff"/><stop offset="0.344" stop-color="#2d00ff"/><stop offset="0.859" stop-color="#ca00ff"/><stop offset="1" stop-color="#fa00ff"/></linearGradient>
<linearGradient id="ag99" gradientUnits="userSpaceOnUse" x1="278" x2="335"><stop offset="0" stop-color="#000eff"/><stop offset="0.175" stop-color="#00f"/><stop offset="0.877" stop-color="#b0f"/><stop offset="1" stop-color="#df00ff"/></linearGradient>
<linearGradient id="ag100" gradientUnits="userSpaceOnUse" x1="279" x2="330"><stop offset="0" stop-color="#0007ff"/><stop offset="0.157" stop-color="#00f"/><stop offset="0.941" stop-color="#b600ff"/><stop offset="1" stop-color="#c500ff"/></linearGradient>
<linearGradient id="ag101" gradientUnits="userSpaceOnUse" x1="280" x2="325"><stop offset="0" stop-color="#00f"/><stop offset="0.156" stop-color="#0200ff"/><stop offset="1" stop-color="#ad00ff"/></linearGradient>
<linearGradient id="ag102" gradientUnits="userSpaceOnUse" x1="282" x2="320"><stop offset="0" stop-color="#00f"/><stop offset="0.105" stop-color="#00f"/><stop offset="1" stop-color="#9600ff"/></linearGradient>
<linearGradient id="ag103" gradientUnits="userSpaceOnUse" x1="284" x2="315"><stop offset="0" stop-color="#00f"/><stop offset="0.097" stop-color="#0900ff"/><stop offset="1" stop-color="#8100ff"/></linearGradient>
<linearGradient id="ag104" gradientUnits="userSpaceOnUse" x1="286" x2="310"><stop offset="0" stop-color="#0700ff"/><stop offset="1" stop-color="#6d00ff"/></linearGradient>
<linearGradient id="ag105" gradientUnits="userSpaceOnUse" x1="289" x2="305"><stop offset="0" stop-color="#1700ff"/><stop offset="1" stop-color="#5900ff"/></linearGradient>
<linearGradient id="ag106" gradientUnits="userSpaceOnUse" x1="291" x2="300"><stop offset="0" stop-color="#20f"/><stop offset="1" stop-color="#4600ff"/></linearGradient>
</defs>
<g clip-path="url(#ap)"><g clip-path="url(#ah)">
<rect x="259" y="25" width="17" height="2.5" fill="url(#ag0)"/>
<rect x="256" y="27" width="26" height="2.5" fill="url(#ag1)"/>
<rect x="253" y="29" width="34" height="2.5" fill="url(#ag2)"/>
<rect x="252" y="31" width="39" height="2.5" fill="url(#ag3)"/>
<rect x="250" y="33" width="45" height="2.5" fill="url(#ag4)"/>
<rect x="249" y="35" width="50" height="2.5" fill="url(#ag5)"/>
<rect x="248" y="37" width="54" height="2.5" fill="url(#ag6)"/>
<rect x="247" y="39" width="58" height="2.5" fill="url(#ag7)"/>
<rect x="247" y="41" width="62" height="2.5" fill="url(#ag8)"/>
<rect x="246" y="43" width="66" height="2.5" fill="url(#ag9)"/>
<rect x="245" y="45" width="70" height="2.5" fill="url(#ag10)"/>
<rect x="245" y="47" width="73" height="2.5" fill="url(#ag11)"/>
<rect x="244" y="49" width="76" height="2.5" fill="url(#ag12)"/>
<rect x="244" y="51" width="79" height="2.5" fill="url(#ag13)"/>
<rect x="244" y="53" width="82" height="2.5" fill="url(#ag14)"/>
<rect x="243" y="55" width="86" height="2.5" fill="url(#ag15)"/>
<rect x="243" y="57" width="88" height="2.5" fill="url(#ag16)"/>
<rect x="243" y="59" width="91" height="2.5" fill="url(#ag17)"/>
<rect x="243" y="61" width="94" height="2.5" fill="url(#ag18)"/>
<rect x="243" y="63" width="96" height="2.5" fill="url(#ag19)"/>
<rect x="242.9" y="65" width="99.1" height="2.5" fill="url(#ag20)"/>
<rect x="242.9" y="67" width="101.1" height="2.5" fill="url(#ag21)"/>
<rect x="242.9" y="69" width="104.1" height="2.5" fill="url(#ag22)"/>
<rect x="242.9" y="71" width="106.1" height="2.5" fill="url(#ag23)"/>
<rect x="242.9" y="73" width="109.1" height="2.5" fill="url(#ag24)"/>
<rect x="242.9" y="75" width="111.1" height="2.5" fill="url(#ag25)"/>
<rect x="242.9" y="77" width="113.1" height="2.5" fill="url(#ag26)"/>
<rect x="242.9" y="79" width="116.1" height="2.5" fill="url(#ag27)"/>
<rect x="242.9" y="81" width="118.1" height="2.5" fill="url(#ag28)"/>
<rect x="242.9" y="83" width="121.1" height="2.5" fill="url(#ag29)"/>
<rect x="242.9" y="85" width="123.1" height="2.5" fill="url(#ag30)"/>
<rect x="242.9" y="87" width="126.1" height="2.5" fill="url(#ag31)"/>
<rect x="243" y="89" width="128" height="2.5" fill="url(#ag32)"/>
<rect x="243" y="91" width="130" height="2.5" fill="url(#ag33)"/>
<rect x="243" y="93" width="133" height="2.5" fill="url(#ag34)"/>
<rect x="243" y="95" width="135" height="2.5" fill="url(#ag35)"/>
<rect x="243" y="97" width="138" height="2.5" fill="url(#ag36)"/>
<rect x="243" y="99" width="140" height="2.5" fill="url(#ag37)"/>
<rect x="243" y="101" width="142" height="2.5" fill="url(#ag38)"/>
<rect x="244" y="103" width="144" height="2.5" fill="url(#ag39)"/>
<rect x="244" y="105" width="146" height="2.5" fill="url(#ag40)"/>
<rect x="244" y="107" width="148" height="2.5" fill="url(#ag41)"/>
<rect x="244" y="109" width="151" height="2.5" fill="url(#ag42)"/>
<rect x="245" y="111" width="152" height="2.5" fill="url(#ag43)"/>
<rect x="245" y="113" width="155" height="2.5" fill="url(#ag44)"/>
<rect x="245" y="115" width="157" height="2.5" fill="url(#ag45)"/>
<rect x="245" y="117" width="159" height="2.5" fill="url(#ag46)"/>
<rect x="246" y="119" width="161" height="2.5" fill="url(#ag47)"/>
<rect x="246" y="121" width="163" height="2.5" fill="url(#ag48)"/>
<rect x="246" y="123" width="165" height="2.5" fill="url(#ag49)"/>
<rect x="247" y="125" width="167" height="2.5" fill="url(#ag50)"/>
<rect x="247" y="127" width="169" height="2.5" fill="url(#ag51)"/>
<rect x="247" y="129" width="172" height="2.5" fill="url(#ag52)"/>
<rect x="248" y="131" width="173" height="2.5" fill="url(#ag53)"/>
<rect x="248" y="133" width="175" height="2.5" fill="url(#ag54)"/>
<rect x="248" y="135" width="178" height="2.5" fill="url(#ag55)"/>
<rect x="249" y="137" width="179" height="2.5" fill="url(#ag56)"/>
<rect x="249" y="139" width="181" height="2.5" fill="url(#ag57)"/>
<rect x="250" y="141" width="183" height="2.5" fill="url(#ag58)"/>
<rect x="250" y="143" width="185" height="2.5" fill="url(#ag59)"/>
<rect x="250" y="145" width="188" height="2.5" fill="url(#ag60)"/>
<rect x="251" y="147" width="189" height="2.5" fill="url(#ag61)"/>
<rect x="251" y="149" width="191" height="2.5" fill="url(#ag62)"/>
<rect x="252" y="151" width="193" height="2.5" fill="url(#ag63)"/>
<rect x="252" y="153" width="195" height="2.5" fill="url(#ag64)"/>
<rect x="253" y="155" width="196" height="2.5" fill="url(#ag65)"/>
<rect x="253" y="157" width="199" height="2.5" fill="url(#ag66)"/>
<rect x="254" y="159" width="200" height="2.5" fill="url(#ag67)"/>
<rect x="254" y="161" width="203" height="2.5" fill="url(#ag68)"/>
<rect x="255" y="163" width="204" height="2.5" fill="url(#ag69)"/>
<rect x="255" y="165" width="206" height="2.5" fill="url(#ag70)"/>
<rect x="256" y="167" width="208" height="2.5" fill="url(#ag71)"/>
<rect x="256" y="169" width="210" height="2.5" fill="url(#ag72)"/>
<rect x="257" y="171" width="209" height="2.5" fill="url(#ag73)"/>
<rect x="257" y="173" width="206" height="2.5" fill="url(#ag74)"/>
<rect x="258" y="175" width="200" height="2.5" fill="url(#ag75)"/>
<rect x="258" y="177" width="194" height="2.5" fill="url(#ag76)"/>
<rect x="259" y="179" width="188" height="2.5" fill="url(#ag77)"/>
<rect x="260" y="181" width="182" height="2.5" fill="url(#ag78)"/>
<rect x="260" y="183" width="177" height="2.5" fill="url(#ag79)"/>
<rect x="261" y="185" width="171" height="2.5" fill="url(#ag80)"/>
<rect x="261" y="187" width="166" height="2.5" fill="url(#ag81)"/>
<rect x="262" y="189" width="160" height="2.5" fill="url(#ag82)"/>
<rect x="263" y="191" width="154" height="2.5" fill="url(#ag83)"/>
<rect x="264" y="193" width="148" height="2.5" fill="url(#ag84)"/>
<rect x="264" y="195" width="143" height="2.5" fill="url(#ag85)"/>
<rect x="265" y="197" width="137" height="2.5" fill="url(#ag86)"/>
<rect x="266" y="199" width="130" height="2.5" fill="url(#ag87)"/>
<rect x="267" y="201" width="124" height="2.5" fill="url(#ag88)"/>
<rect x="268" y="203" width="118" height="2.5" fill="url(#ag89)"/>
<rect x="268" y="205" width="113" height="2.5" fill="url(#ag90)"/>
<rect x="269" y="207" width="107" height="2.5" fill="url(#ag91)"/>
<rect x="270" y="209" width="101" height="2.5" fill="url(#ag92)"/>
<rect x="271" y="211" width="95" height="2.5" fill="url(#ag93)"/>
<rect x="272" y="213" width="89" height="2.5" fill="url(#ag94)"/>
<rect x="273" y="215" width="83" height="2.5" fill="url(#ag95)"/>
<rect x="274" y="217" width="77" height="2.5" fill="url(#ag96)"/>
<rect x="275" y="219" width="70" height="2.5" fill="url(#ag97)"/>
<rect x="276" y="221" width="64" height="2.5" fill="url(#ag98)"/>
<rect x="278" y="223" width="57" height="2.5" fill="url(#ag99)"/>
<rect x="279" y="225" width="51" height="2.5" fill="url(#ag100)"/>
<rect x="280" y="227" width="45" height="2.5" fill="url(#ag101)"/>
<rect x="282" y="229" width="38" height="2.5" fill="url(#ag102)"/>
<rect x="284" y="231" width="31" height="2.5" fill="url(#ag103)"/>
<rect x="286" y="233" width="24" height="2.5" fill="url(#ag104)"/>
<rect x="289" y="235" width="16" height="2.5" fill="url(#ag105)"/>
<rect x="291" y="237" width="9" height="2.5" fill="url(#ag106)"/>
<path d="M295.3,238.1 295.2,238.1 295.2,238.1 295.1,238.2 295.1,238.2 295,238.2 295,238.2 294.9,238.2 294.9,238.2 294.8,238.2 294.8,238.2 294.7,238.2 294.7,238.2 294.6,238.1 294.5,238.1 294.4,238.1 294.4,238.1 294.3,238 294.2,238 294.2,238 294.1,237.9 294,237.9 293.9,237.8 293.9,237.8 293.8,237.7 293.7,237.6 293.6,237.6 293.5,237.5 293.3,237.4 293.2,237.3 293.1,237.2 292.9,237.1 292.8,237 292.6,236.9 292.5,236.7 292.3,236.6 292.1,236.5 291.9,236.3 291.8,236.2 291.5,236 291.3,235.9 291.1,235.7 290.8,235.5 290.5,235.3 290.2,235.1 289.9,234.9 289.6,234.6 289.3,234.4 289,234.1 288.6,233.9 288.3,233.6 287.9,233.3 287.5,232.9 287,232.6 286.6,232.2 286.1,231.8 285.7,231.4 285.2,230.9 284.7,230.4 284.1,229.8 283.6,229.2 282.9,228.4 282.3,227.6 281.6,226.7 280.9,225.7 280.1,224.6 279.3,223.4 278.5,222 277.6,220.6 276.7,219 275.7,217.2 274.7,215.2 273.6,213.1 272.5,210.7 271.4,208.2 270.2,205.4 268.9,202.4 267.5,199.2 266.1,195.7 264.7,192 263.3,188 261.9,183.7 260.5,179.1 259.1,174.3 257.6,169.2 256.3,163.9 254.9,158.2 253.5,152.3 252.1,146.2 250.8,140 249.6,133.7 248.5,127.4 247.5,120.9 246.5,114.3 245.7,107.8 245,101.5 244.4,95.3 244,89.2 243.7,83.1 243.6,77.3 243.7,71.7 243.9,66.3 244.4,61.1 245,56.2 245.7,51.5 246.7,47.3 247.9,43.4 249.3,39.8 250.8,36.6 252.5,33.8 254.3,31.4 256.2,29.6 258.3,28.1 260.5,27.1 262.7,26.3 265,25.9 267.3,25.7 269.7,25.9 272.2,26.4 274.7,27.1 277.1,27.8 279.6,28.6 282,29.6 284.5,30.7 287,31.9 289.4,33 291.7,34.2 294.1,35.4 296.4,36.6 298.7,37.9 300.9,39.2 303.2,40.6 305.4,41.9 307.7,43.3 309.9,44.8 312.1,46.2 314.3,47.7 316.5,49.2 318.7,50.8 320.9,52.3 323,53.9 325.2,55.5 327.4,57.1 329.6,58.8 331.7,60.4 333.9,62.1 336,63.8 338.2,65.5 340.4,67.2 342.5,68.9 344.7,70.7 346.9,72.4 349,74.2 351.2,75.9 353.4,77.7 355.5,79.5 357.7,81.2 359.9,83 362,84.8 364.2,86.6 366.3,88.4 368.5,90.2 370.6,92 372.8,93.8 374.9,95.6 377.1,97.3 379.2,99.1 381.3,100.9 383.4,102.7 385.5,104.4 387.6,106.2 389.6,107.9 391.7,109.7 393.7,111.4 395.8,113.1 397.8,114.8 399.8,116.5 401.8,118.1 403.7,119.8 405.7,121.4 407.6,123 409.5,124.6 411.3,126.2 413.2,127.7 415,129.3 416.8,130.8 418.5,132.2 420.3,133.7 421.9,135.1 423.6,136.5 425.2,137.9 426.7,139.2 428.2,140.4 429.7,141.6 431.1,142.8 432.5,144 433.8,145.1 435.2,146.3 436.5,147.3 437.7,148.4 438.9,149.4 440.1,150.4 441.2,151.3 442.2,152.2 443.3,153 444.2,153.9 445.2,154.7 446.1,155.4 446.9,156.2 447.8,156.9 448.6,157.5 449.3,158.2 450,158.8 450.7,159.4 451.4,159.9 452,160.4 452.6,161 453.2,161.4 453.8,161.9 454.3,162.3 454.8,162.7 455.2,163.1 455.7,163.5 456.1,163.8 456.5,164.2 457,164.6 457.6,165.1 458.3,165.7 459,166.4 459.7,166.9 460.4,167.5 460.9,167.9 461.3,168.3 461.8,168.6 462.1,168.9 462.5,169.2 462.8,169.5 463,169.7 463.2,169.9 463.4,170 463.7,170.3 464,170.5 464.3,170.8 464.6,171.1 464.9,171.3 465.1,171.5Z M448.1,157.6 322.8,62.7 287.9,224Z" fill="#000" fill-opacity="0.40" fill-rule="evenodd"/>
</g></g>
<rect x="242.9" y="24.5" width="223.5" height="215.1" fill="none" stroke="#8c8c8c" stroke-width="1.2"/>
<g class="ax">
<line x1="240.3" x2="242.9" y1="240" y2="240"/>
<text x="239.7" y="242.8" text-anchor="end">0</text>
<line x1="240.3" x2="242.9" y1="214.4" y2="214.4"/>
<text x="239.7" y="217.2" text-anchor="end">0,1</text>
<line x1="240.3" x2="242.9" y1="188.8" y2="188.8"/>
<text x="239.7" y="191.6" text-anchor="end">0,2</text>
<line x1="240.3" x2="242.9" y1="163.2" y2="163.2"/>
<text x="239.7" y="166" text-anchor="end">0,3</text>
<line x1="240.3" x2="242.9" y1="137.6" y2="137.6"/>
<text x="239.7" y="140.4" text-anchor="end">0,4</text>
<line x1="240.3" x2="242.9" y1="111.9" y2="111.9"/>
<text x="239.7" y="114.7" text-anchor="end">0,5</text>
<line x1="240.3" x2="242.9" y1="86.3" y2="86.3"/>
<text x="239.7" y="89.1" text-anchor="end">0,6</text>
<line x1="240.3" x2="242.9" y1="60.7" y2="60.7"/>
<text x="239.7" y="63.5" text-anchor="end">0,7</text>
<line x1="240.3" x2="242.9" y1="35.1" y2="35.1"/>
<text x="239.7" y="37.9" text-anchor="end">0,8</text>
<line x1="243.1" x2="243.1" y1="239.6" y2="242.6"/>
<text x="243.1" y="250.6" text-anchor="middle">0</text>
<line x1="273.4" x2="273.4" y1="239.6" y2="242.6"/>
<text x="273.4" y="250.6" text-anchor="middle">0,1</text>
<line x1="303.7" x2="303.7" y1="239.6" y2="242.6"/>
<text x="303.7" y="250.6" text-anchor="middle">0,2</text>
<line x1="334" x2="334" y1="239.6" y2="242.6"/>
<text x="334" y="250.6" text-anchor="middle">0,3</text>
<line x1="364.3" x2="364.3" y1="239.6" y2="242.6"/>
<text x="364.3" y="250.6" text-anchor="middle">0,4</text>
<line x1="394.6" x2="394.6" y1="239.6" y2="242.6"/>
<text x="394.6" y="250.6" text-anchor="middle">0,5</text>
<line x1="424.9" x2="424.9" y1="239.6" y2="242.6"/>
<text x="424.9" y="250.6" text-anchor="middle">0,6</text>
<line x1="455.2" x2="455.2" y1="239.6" y2="242.6"/>
<text x="455.2" y="250.6" text-anchor="middle">0,7</text>
</g>
<rect x="334.6" y="152.5" width="5.3" height="5.3" fill="none" stroke="#1a1a1a" stroke-opacity=".75" stroke-width="2.3"/>
<rect x="334.6" y="152.5" width="5.3" height="5.3" fill="none" stroke="#f6f6f6" stroke-width="1.1"/>
<rect x="445.5" y="154.9" width="5.3" height="5.3" fill="none" stroke="#1a1a1a" stroke-opacity=".75" stroke-width="2.3"/>
<rect x="445.5" y="154.9" width="5.3" height="5.3" fill="none" stroke="#f6f6f6" stroke-width="1.1"/>
<rect x="320.1" y="60" width="5.3" height="5.3" fill="none" stroke="#1a1a1a" stroke-opacity=".75" stroke-width="2.3"/>
<rect x="320.1" y="60" width="5.3" height="5.3" fill="none" stroke="#f6f6f6" stroke-width="1.1"/>
<rect x="285.3" y="221.4" width="5.3" height="5.3" fill="none" stroke="#1a1a1a" stroke-opacity=".75" stroke-width="2.3"/>
<rect x="285.3" y="221.4" width="5.3" height="5.3" fill="none" stroke="#f6f6f6" stroke-width="1.1"/>
<rect x="300.3" y="151.8" width="5.3" height="5.3" fill="none" stroke="#1a1a1a" stroke-opacity=".75" stroke-width="2.3"/>
<rect x="300.3" y="151.8" width="5.3" height="5.3" fill="none" stroke="#f6f6f6" stroke-width="1.1"/>
<rect x="341.7" y="198" width="5.3" height="5.3" fill="none" stroke="#1a1a1a" stroke-opacity=".75" stroke-width="2.3"/>
<rect x="341.7" y="198" width="5.3" height="5.3" fill="none" stroke="#f6f6f6" stroke-width="1.1"/>
<rect x="372.4" y="99.6" width="5.3" height="5.3" fill="none" stroke="#1a1a1a" stroke-opacity=".75" stroke-width="2.3"/>
<rect x="372.4" y="99.6" width="5.3" height="5.3" fill="none" stroke="#f6f6f6" stroke-width="1.1"/>
<circle cx="335.4" cy="155.4" r="2" fill="none" stroke="#151515" stroke-width=".8"/>
<circle cx="443.8" cy="161" r="2" fill="none" stroke="#151515" stroke-width=".8"/>
<circle cx="325.2" cy="69.3" r="2" fill="none" stroke="#151515" stroke-width=".8"/>
<circle cx="289.4" cy="224.4" r="2" fill="none" stroke="#151515" stroke-width=".8"/>
<circle cx="305.6" cy="154.1" r="2" fill="none" stroke="#151515" stroke-width=".8"/>
<circle cx="342.2" cy="204.5" r="2" fill="none" stroke="#151515" stroke-width=".8"/>
<circle cx="369.7" cy="103.7" r="2" fill="none" stroke="#151515" stroke-width=".8"/>
<text class="ct" x="331.5" y="22">CIE 1931 xy</text>
<rect x="496.3" y="24.5" width="220.1" height="215.2" fill="#232323"/>
<defs>
<clipPath id="bp"><rect x="496.8" y="25" width="219.6" height="214.7"/></clipPath>
<clipPath id="bh"><path d="M590.1,233.4 590.1,233.4 590,233.4 589.9,233.5 589.8,233.6 589.7,233.6 589.6,233.6 589.6,233.6 589.5,233.6 589.4,233.6 589.3,233.6 589.1,233.6 589,233.5 588.8,233.4 588.6,233.4 588.4,233.2 588.3,233.1 588.1,233 587.9,232.8 587.7,232.6 587.5,232.4 587.3,232.2 587,232 586.8,231.8 586.5,231.5 586.2,231.2 585.9,230.9 585.5,230.5 585.1,230.1 584.8,229.7 584.3,229.3 583.9,228.8 583.5,228.3 583,227.8 582.5,227.3 582,226.7 581.5,226.2 580.9,225.6 580.3,225 579.7,224.3 579,223.6 578.3,222.9 577.6,222.1 576.8,221.3 576,220.5 575.2,219.6 574.3,218.7 573.4,217.8 572.5,216.8 571.5,215.8 570.5,214.6 569.4,213.5 568.3,212.2 567.2,211 566,209.6 564.7,208.1 563.5,206.5 562.2,204.9 560.9,203.3 559.4,201.4 557.9,199.2 556.2,196.8 554.4,194.2 552.6,191.4 550.7,188.4 548.7,185.2 546.7,181.7 544.6,178.1 542.4,174.4 540.2,170.3 537.9,166 535.6,161.5 533.3,156.9 530.9,152.2 528.6,147.3 526.2,142.2 523.9,137.1 521.5,131.9 519.2,126.8 517,121.6 514.9,116.4 513,111.3 511.1,106.2 509.3,101.2 507.7,96.4 506.1,91.7 504.7,87.2 503.4,82.8 502.2,78.5 501.1,74.6 500.2,70.9 499.4,67.4 498.6,64 498,60.9 497.5,58 497.1,55.4 496.8,52.9 496.5,50.6 496.4,48.4 496.3,46.4 496.3,44.6 496.4,42.9 496.6,41.3 496.8,39.8 497.1,38.4 497.5,37.2 497.9,36 498.5,35 499,34 499.7,33.2 500.3,32.5 501,31.8 501.8,31.3 502.6,30.8 503.4,30.4 504.3,30.1 505.2,29.8 506.1,29.6 507.1,29.4 508,29.3 509,29.2 510,29.1 511.1,29 512.1,29 513.1,29 514.2,28.9 515.2,28.9 516.3,28.9 517.3,29 518.4,29 519.4,29 520.5,29.1 521.6,29.1 522.7,29.2 523.8,29.3 524.9,29.4 526,29.4 527.2,29.5 528.4,29.7 529.6,29.8 530.8,29.9 532,30 533.3,30.2 534.6,30.3 535.9,30.5 537.2,30.6 538.5,30.8 539.9,31 541.3,31.2 542.8,31.3 544.2,31.5 545.7,31.7 547.3,31.9 548.8,32.1 550.4,32.4 552,32.6 553.7,32.8 555.4,33.1 557.1,33.3 558.9,33.6 560.7,33.8 562.5,34.1 564.4,34.3 566.3,34.6 568.2,34.9 570.2,35.2 572.2,35.5 574.3,35.8 576.4,36.1 578.5,36.4 580.7,36.7 582.9,37 585.2,37.4 587.5,37.7 589.8,38 592.2,38.4 594.6,38.7 597,39.1 599.5,39.5 602,39.8 604.5,40.2 607.1,40.6 609.7,40.9 612.3,41.3 614.9,41.7 617.6,42.1 620.2,42.5 622.9,42.9 625.6,43.3 628.3,43.7 631,44.1 633.6,44.4 636.2,44.8 638.8,45.2 641.4,45.6 644,45.9 646.6,46.3 649.1,46.7 651.7,47.1 654.2,47.4 656.7,47.8 659.1,48.1 661.4,48.5 663.7,48.8 665.9,49.1 668.1,49.5 670.3,49.8 672.4,50.1 674.4,50.4 676.3,50.7 678.3,50.9 680.1,51.2 681.9,51.5 683.6,51.7 685.3,52 686.9,52.2 688.4,52.4 689.9,52.6 691.4,52.9 692.8,53.1 694.1,53.2 695.4,53.4 696.5,53.6 697.6,53.8 698.8,53.9 700.2,54.1 702,54.4 704,54.7 706.1,55 708.1,55.3 709.9,55.6 711.5,55.8 712.9,56 714.1,56.2 715.3,56.3 716.4,56.5 717.3,56.6 718,56.7 718.7,56.8 719.4,56.9 720.2,57 721.1,57.2 722.2,57.3 723.2,57.5 724.1,57.6 724.8,57.7Z"/></clipPath>
<linearGradient id="bg0" gradientUnits="userSpaceOnUse" x1="503" x2="533"><stop offset="0" stop-color="#0f0"/><stop offset="1" stop-color="#0f0"/></linearGradient>
<linearGradient id="bg1" gradientUnits="userSpaceOnUse" x1="499" x2="549"><stop offset="0" stop-color="#0f0"/><stop offset="0.8" stop-color="#0f0"/><stop offset="0.84" stop-color="#02ff00"/><stop offset="1" stop-color="#41ff00"/></linearGradient>
<linearGradient id="bg2" gradientUnits="userSpaceOnUse" x1="498" x2="563"><stop offset="0" stop-color="#00ff03"/><stop offset="0.615" stop-color="#0f0"/><stop offset="0.662" stop-color="#0f0"/><stop offset="1" stop-color="#b2ff00"/></linearGradient>
<linearGradient id="bg3" gradientUnits="userSpaceOnUse" x1="496.3" x2="577"><stop offset="0" stop-color="#00ff0e"/><stop offset="0.359" stop-color="#0f0"/><stop offset="0.558" stop-color="#0f0"/><stop offset="0.843" stop-color="#beff00"/><stop offset="0.929" stop-color="#fffe00"/><stop offset="1.004" stop-color="#fc0"/></linearGradient>
<linearGradient id="bg4" gradientUnits="userSpaceOnUse" x1="496.3" x2="591"><stop offset="0" stop-color="#00ff17"/><stop offset="0.422" stop-color="#0f0"/><stop offset="0.475" stop-color="#0f0"/><stop offset="0.707" stop-color="#b6ff00"/><stop offset="0.792" stop-color="#fffc00"/><stop offset="0.866" stop-color="#ffc300"/><stop offset="0.971" stop-color="#ff8e00"/><stop offset="1.003" stop-color="#ff8200"/></linearGradient>
<linearGradient id="bg5" gradientUnits="userSpaceOnUse" x1="496.3" x2="605"><stop offset="0" stop-color="#00ff20"/><stop offset="0.368" stop-color="#00ff0d"/><stop offset="0.414" stop-color="#00ff0a"/><stop offset="0.442" stop-color="#16ff08"/><stop offset="0.57" stop-color="#8aff00"/><stop offset="0.681" stop-color="#f9ff00"/><stop offset="0.699" stop-color="#fff100"/><stop offset="0.764" stop-color="#fb0"/><stop offset="0.856" stop-color="#f80"/><stop offset="0.994" stop-color="#ff5900"/><stop offset="1.003" stop-color="#ff5600"/></linearGradient>
<linearGradient id="bg6" gradientUnits="userSpaceOnUse" x1="496.3" x2="618"><stop offset="0" stop-color="#00ff28"/><stop offset="0.329" stop-color="#00ff19"/><stop offset="0.378" stop-color="#02ff16"/><stop offset="0.559" stop-color="#c0ff06"/><stop offset="0.608" stop-color="#fbff00"/><stop offset="0.633" stop-color="#ffe600"/><stop offset="0.698" stop-color="#ffad00"/><stop offset="0.789" stop-color="#ff7b00"/><stop offset="0.92" stop-color="#ff4e00"/><stop offset="1.002" stop-color="#ff3b00"/></linearGradient>
<linearGradient id="bg7" gradientUnits="userSpaceOnUse" x1="496.3" x2="632"><stop offset="0" stop-color="#00ff31"/><stop offset="0.295" stop-color="#00ff25"/><stop offset="0.339" stop-color="#0f2"/><stop offset="0.501" stop-color="#c0ff16"/><stop offset="0.545" stop-color="#fcff12"/><stop offset="0.604" stop-color="#ffbe08"/><stop offset="0.678" stop-color="#ff8900"/><stop offset="0.781" stop-color="#ff5b00"/><stop offset="0.943" stop-color="#ff3000"/><stop offset="1.002" stop-color="#ff2400"/></linearGradient>
<linearGradient id="bg8" gradientUnits="userSpaceOnUse" x1="496.3" x2="646"><stop offset="0" stop-color="#00ff39"/><stop offset="0.267" stop-color="#00ff30"/><stop offset="0.307" stop-color="#00ff2e"/><stop offset="0.441" stop-color="#aeff26"/><stop offset="0.494" stop-color="#feff21"/><stop offset="0.541" stop-color="#ffc316"/><stop offset="0.601" stop-color="#ff900c"/><stop offset="0.688" stop-color="#ff6103"/><stop offset="0.822" stop-color="#ff3600"/><stop offset="1.002" stop-color="#ff1300"/></linearGradient>
<linearGradient id="bg9" gradientUnits="userSpaceOnUse" x1="496.3" x2="660"><stop offset="0" stop-color="#00ff42"/><stop offset="0.244" stop-color="#00ff3b"/><stop offset="0.281" stop-color="#00ff3a"/><stop offset="0.293" stop-color="#0eff39"/><stop offset="0.409" stop-color="#b8ff34"/><stop offset="0.452" stop-color="#ffff31"/><stop offset="0.489" stop-color="#ffc925"/><stop offset="0.544" stop-color="#ff9318"/><stop offset="0.623" stop-color="#ff630c"/><stop offset="0.745" stop-color="#ff3601"/><stop offset="0.947" stop-color="#ff0d00"/><stop offset="1.002" stop-color="#ff0500"/></linearGradient>
<linearGradient id="bg10" gradientUnits="userSpaceOnUse" x1="496.3" x2="673"><stop offset="0" stop-color="#00ff4a"/><stop offset="0.226" stop-color="#00ff47"/><stop offset="0.266" stop-color="#02ff46"/><stop offset="0.385" stop-color="#c2ff42"/><stop offset="0.419" stop-color="#fffd40"/><stop offset="0.453" stop-color="#ffc731"/><stop offset="0.504" stop-color="#ff9122"/><stop offset="0.577" stop-color="#ff6115"/><stop offset="0.69" stop-color="#ff3508"/><stop offset="0.86" stop-color="#ff0f00"/><stop offset="0.968" stop-color="#f00"/><stop offset="1.002" stop-color="#f00"/></linearGradient>
<linearGradient id="bg11" gradientUnits="userSpaceOnUse" x1="496.3" x2="687"><stop offset="0" stop-color="#00ff53"/><stop offset="0.21" stop-color="#00ff52"/><stop offset="0.246" stop-color="#00ff52"/><stop offset="0.351" stop-color="#b9ff51"/><stop offset="0.383" stop-color="#f8ff50"/><stop offset="0.388" stop-color="#fffb4f"/><stop offset="0.42" stop-color="#ffc53e"/><stop offset="0.467" stop-color="#ff902c"/><stop offset="0.535" stop-color="#ff5f1d"/><stop offset="0.64" stop-color="#ff330f"/><stop offset="0.818" stop-color="#ff0901"/><stop offset="0.891" stop-color="#f00"/><stop offset="1.002" stop-color="#f00"/></linearGradient>
<linearGradient id="bg12" gradientUnits="userSpaceOnUse" x1="496.3" x2="701"><stop offset="0" stop-color="#00ff5c"/><stop offset="0.195" stop-color="#00ff5d"/><stop offset="0.23" stop-color="#00ff5e"/><stop offset="0.322" stop-color="#afff5f"/><stop offset="0.357" stop-color="#f9ff60"/><stop offset="0.366" stop-color="#ffef5a"/><stop offset="0.401" stop-color="#ffb545"/><stop offset="0.445" stop-color="#ff8533"/><stop offset="0.513" stop-color="#f52"/><stop offset="0.616" stop-color="#ff2b12"/><stop offset="0.801" stop-color="#ff0003"/><stop offset="0.997" stop-color="#f00"/><stop offset="1.001" stop-color="#f00"/></linearGradient>
<linearGradient id="bg13" gradientUnits="userSpaceOnUse" x1="496.3" x2="714"><stop offset="0" stop-color="#00ff65"/><stop offset="0.184" stop-color="#00ff69"/><stop offset="0.216" stop-color="#00ff6a"/><stop offset="0.225" stop-color="#0fff6a"/><stop offset="0.308" stop-color="#baff6e"/><stop offset="0.335" stop-color="#fbff70"/><stop offset="0.349" stop-color="#ffe364"/><stop offset="0.381" stop-color="#ffad4e"/><stop offset="0.427" stop-color="#ff7a39"/><stop offset="0.496" stop-color="#ff4c26"/><stop offset="0.602" stop-color="#ff2315"/><stop offset="0.758" stop-color="#ff0007"/><stop offset="0.942" stop-color="#f00"/><stop offset="1.001" stop-color="#f00"/></linearGradient>
<linearGradient id="bg14" gradientUnits="userSpaceOnUse" x1="496.3" x2="716.4"><stop offset="0" stop-color="#00ff6d"/><stop offset="0.182" stop-color="#00ff75"/><stop offset="0.218" stop-color="#02ff77"/><stop offset="0.309" stop-color="#c5ff7e"/><stop offset="0.332" stop-color="#fcff80"/><stop offset="0.363" stop-color="#ffc063"/><stop offset="0.404" stop-color="#ff8a4a"/><stop offset="0.463" stop-color="#ff5a34"/><stop offset="0.554" stop-color="#ff2f21"/><stop offset="0.718" stop-color="#ff030e"/><stop offset="0.9" stop-color="#ff0003"/><stop offset="1" stop-color="#f00"/></linearGradient>
<linearGradient id="bg15" gradientUnits="userSpaceOnUse" x1="496.3" x2="716.4"><stop offset="0" stop-color="#00ff76"/><stop offset="0.182" stop-color="#00ff81"/><stop offset="0.218" stop-color="#00ff84"/><stop offset="0.304" stop-color="#bbff8d"/><stop offset="0.332" stop-color="#feff90"/><stop offset="0.359" stop-color="#ffc573"/><stop offset="0.395" stop-color="#ff9259"/><stop offset="0.45" stop-color="#ff6140"/><stop offset="0.532" stop-color="#ff362b"/><stop offset="0.668" stop-color="#ff0d17"/><stop offset="0.741" stop-color="#ff0010"/><stop offset="0.922" stop-color="#ff0005"/><stop offset="1" stop-color="#ff0001"/></linearGradient>
<linearGradient id="bg16" gradientUnits="userSpaceOnUse" x1="496.3" x2="716.4"><stop offset="0" stop-color="#00ff7f"/><stop offset="0.182" stop-color="#00ff8d"/><stop offset="0.218" stop-color="#00ff91"/><stop offset="0.295" stop-color="#a6ff9b"/><stop offset="0.332" stop-color="#fffea1"/><stop offset="0.359" stop-color="#ffc480"/><stop offset="0.395" stop-color="#ff9063"/><stop offset="0.45" stop-color="#ff6048"/><stop offset="0.532" stop-color="#ff3431"/><stop offset="0.672" stop-color="#ff0a1b"/><stop offset="0.736" stop-color="#ff0015"/><stop offset="0.918" stop-color="#ff0008"/><stop offset="1" stop-color="#ff0004"/></linearGradient>
<linearGradient id="bg17" gradientUnits="userSpaceOnUse" x1="497" x2="716.4"><stop offset="0" stop-color="#00ff89"/><stop offset="0.182" stop-color="#00ff9a"/><stop offset="0.219" stop-color="#01ff9e"/><stop offset="0.305" stop-color="#c3ffad"/><stop offset="0.328" stop-color="#feffb2"/><stop offset="0.356" stop-color="#ffc48e"/><stop offset="0.392" stop-color="#ff906e"/><stop offset="0.447" stop-color="#ff5f51"/><stop offset="0.529" stop-color="#ff3337"/><stop offset="0.67" stop-color="#ff091f"/><stop offset="0.729" stop-color="#ff0019"/><stop offset="0.912" stop-color="#ff000c"/><stop offset="1" stop-color="#ff0007"/></linearGradient>
<linearGradient id="bg18" gradientUnits="userSpaceOnUse" x1="497" x2="716.4"><stop offset="0" stop-color="#00ff92"/><stop offset="0.182" stop-color="#00ffa6"/><stop offset="0.219" stop-color="#00ffac"/><stop offset="0.301" stop-color="#b9ffbd"/><stop offset="0.328" stop-color="#fffec3"/><stop offset="0.351" stop-color="#ffcaa1"/><stop offset="0.383" stop-color="#ff9980"/><stop offset="0.433" stop-color="#ff675f"/><stop offset="0.506" stop-color="#ff3b43"/><stop offset="0.629" stop-color="#ff122a"/><stop offset="0.716" stop-color="#ff001f"/><stop offset="0.898" stop-color="#ff0010"/><stop offset="1" stop-color="#ff000a"/></linearGradient>
<linearGradient id="bg19" gradientUnits="userSpaceOnUse" x1="498" x2="716.4"><stop offset="0" stop-color="#00ff9c"/><stop offset="0.183" stop-color="#00ffb4"/><stop offset="0.215" stop-color="#00ffba"/><stop offset="0.261" stop-color="#63ffc4"/><stop offset="0.316" stop-color="#e9ffd3"/><stop offset="0.325" stop-color="#fffcd4"/><stop offset="0.348" stop-color="#ffc8ae"/><stop offset="0.38" stop-color="#ff978b"/><stop offset="0.426" stop-color="#ff696a"/><stop offset="0.499" stop-color="#ff3c4b"/><stop offset="0.618" stop-color="#ff1330"/><stop offset="0.71" stop-color="#ff0023"/><stop offset="0.893" stop-color="#ff0013"/><stop offset="1" stop-color="#ff000d"/></linearGradient>
<linearGradient id="bg20" gradientUnits="userSpaceOnUse" x1="498" x2="716.4"><stop offset="0" stop-color="#00ffa6"/><stop offset="0.183" stop-color="#00ffc1"/><stop offset="0.215" stop-color="#00ffc8"/><stop offset="0.22" stop-color="#04ffc9"/><stop offset="0.298" stop-color="#baffdf"/><stop offset="0.321" stop-color="#f7ffe7"/><stop offset="0.325" stop-color="#fffae5"/><stop offset="0.348" stop-color="#ffc6bc"/><stop offset="0.38" stop-color="#ff9596"/><stop offset="0.426" stop-color="#ff6773"/><stop offset="0.499" stop-color="#ff3a52"/><stop offset="0.618" stop-color="#ff1134"/><stop offset="0.701" stop-color="#ff0028"/><stop offset="0.884" stop-color="#ff0017"/><stop offset="1" stop-color="#ff0010"/></linearGradient>
<linearGradient id="bg21" gradientUnits="userSpaceOnUse" x1="498" x2="716.4"><stop offset="0" stop-color="#00ffaf"/><stop offset="0.183" stop-color="#00ffcf"/><stop offset="0.22" stop-color="#00ffd8"/><stop offset="0.302" stop-color="#c6fff3"/><stop offset="0.321" stop-color="#f9fffa"/><stop offset="0.325" stop-color="#fff8f6"/><stop offset="0.348" stop-color="#ffc4ca"/><stop offset="0.38" stop-color="#ff92a1"/><stop offset="0.426" stop-color="#ff657c"/><stop offset="0.499" stop-color="#ff3858"/><stop offset="0.618" stop-color="#ff1039"/><stop offset="0.696" stop-color="#ff002d"/><stop offset="0.879" stop-color="#ff001a"/><stop offset="1" stop-color="#ff0013"/></linearGradient>
<linearGradient id="bg22" gradientUnits="userSpaceOnUse" x1="499" x2="715"><stop offset="0" stop-color="#00ffba"/><stop offset="0.185" stop-color="#00ffde"/><stop offset="0.218" stop-color="#00ffe7"/><stop offset="0.292" stop-color="#aefdff"/><stop offset="0.329" stop-color="#ffeafc"/><stop offset="0.356" stop-color="#ffb2ca"/><stop offset="0.394" stop-color="#ff809e"/><stop offset="0.449" stop-color="#ff5276"/><stop offset="0.537" stop-color="#ff2752"/><stop offset="0.681" stop-color="#f03"/><stop offset="0.866" stop-color="#ff001f"/><stop offset="1" stop-color="#ff0016"/></linearGradient>
<linearGradient id="bg23" gradientUnits="userSpaceOnUse" x1="499" x2="714"><stop offset="0" stop-color="#00ffc4"/><stop offset="0.181" stop-color="#00ffeb"/><stop offset="0.219" stop-color="#00fff6"/><stop offset="0.233" stop-color="#1efffb"/><stop offset="0.279" stop-color="#85f1ff"/><stop offset="0.335" stop-color="#fcdaff"/><stop offset="0.372" stop-color="#ff9ac3"/><stop offset="0.414" stop-color="#ff6c98"/><stop offset="0.479" stop-color="#ff4070"/><stop offset="0.586" stop-color="#ff174b"/><stop offset="0.684" stop-color="#ff0038"/><stop offset="0.87" stop-color="#f02"/><stop offset="1" stop-color="#ff0018"/></linearGradient>
<linearGradient id="bg24" gradientUnits="userSpaceOnUse" x1="500" x2="712"><stop offset="0" stop-color="#00ffcf"/><stop offset="0.175" stop-color="#00fff7"/><stop offset="0.212" stop-color="#00faff"/><stop offset="0.222" stop-color="#04f7ff"/><stop offset="0.278" stop-color="#7ce2ff"/><stop offset="0.344" stop-color="#ffc7fe"/><stop offset="0.377" stop-color="#ff92c9"/><stop offset="0.425" stop-color="#ff629a"/><stop offset="0.495" stop-color="#ff3770"/><stop offset="0.608" stop-color="#ff104b"/><stop offset="0.684" stop-color="#ff003d"/><stop offset="0.873" stop-color="#ff0025"/><stop offset="1" stop-color="#ff001c"/></linearGradient>
<linearGradient id="bg25" gradientUnits="userSpaceOnUse" x1="501" x2="711"><stop offset="0" stop-color="#00ffdb"/><stop offset="0.157" stop-color="#00fdff"/><stop offset="0.219" stop-color="#00e8ff"/><stop offset="0.262" stop-color="#59d9ff"/><stop offset="0.348" stop-color="#fbb8ff"/><stop offset="0.362" stop-color="#ffa3ea"/><stop offset="0.4" stop-color="#ff75b9"/><stop offset="0.457" stop-color="#ff498b"/><stop offset="0.543" stop-color="#ff2264"/><stop offset="0.671" stop-color="#ff0043"/><stop offset="0.862" stop-color="#ff002a"/><stop offset="1" stop-color="#ff001f"/></linearGradient>
<linearGradient id="bg26" gradientUnits="userSpaceOnUse" x1="501" x2="709"><stop offset="0" stop-color="#00ffe5"/><stop offset="0.115" stop-color="#00fcff"/><stop offset="0.221" stop-color="#00dbff"/><stop offset="0.312" stop-color="#a9bbff"/><stop offset="0.361" stop-color="#fea8ff"/><stop offset="0.399" stop-color="#ff77c8"/><stop offset="0.452" stop-color="#ff4d99"/><stop offset="0.534" stop-color="#ff266f"/><stop offset="0.663" stop-color="#ff004a"/><stop offset="0.856" stop-color="#ff002e"/><stop offset="1" stop-color="#f02"/></linearGradient>
<linearGradient id="bg27" gradientUnits="userSpaceOnUse" x1="502" x2="708"><stop offset="0" stop-color="#00fff1"/><stop offset="0.068" stop-color="#00fcff"/><stop offset="0.218" stop-color="#00cfff"/><stop offset="0.364" stop-color="#fa9bff"/><stop offset="0.374" stop-color="#ff91f4"/><stop offset="0.413" stop-color="#ff68c3"/><stop offset="0.471" stop-color="#ff4095"/><stop offset="0.558" stop-color="#ff1b6c"/><stop offset="0.665" stop-color="#ff004f"/><stop offset="0.859" stop-color="#ff0032"/><stop offset="1" stop-color="#ff0025"/></linearGradient>
<linearGradient id="bg28" gradientUnits="userSpaceOnUse" x1="502" x2="706"><stop offset="0" stop-color="#00fffd"/><stop offset="0.196" stop-color="#0cf"/><stop offset="0.225" stop-color="#03c3ff"/><stop offset="0.294" stop-color="#78acff"/><stop offset="0.377" stop-color="#fd8dff"/><stop offset="0.422" stop-color="#ff61c8"/><stop offset="0.48" stop-color="#ff3b99"/><stop offset="0.569" stop-color="#ff1870"/><stop offset="0.667" stop-color="#ff0054"/><stop offset="0.863" stop-color="#ff0035"/><stop offset="1" stop-color="#ff0028"/></linearGradient>
<linearGradient id="bg29" gradientUnits="userSpaceOnUse" x1="503" x2="705"><stop offset="0" stop-color="#00f5ff"/><stop offset="0.198" stop-color="#00c0ff"/><stop offset="0.223" stop-color="#00b8ff"/><stop offset="0.277" stop-color="#5ba7ff"/><stop offset="0.386" stop-color="#ff80fe"/><stop offset="0.426" stop-color="#ff5bcd"/><stop offset="0.485" stop-color="#ff379e"/><stop offset="0.574" stop-color="#ff1574"/><stop offset="0.658" stop-color="#ff005b"/><stop offset="0.856" stop-color="#ff003a"/><stop offset="1" stop-color="#ff002b"/></linearGradient>
<linearGradient id="bg30" gradientUnits="userSpaceOnUse" x1="503" x2="703"><stop offset="0" stop-color="#00ebff"/><stop offset="0.2" stop-color="#00b6ff"/><stop offset="0.225" stop-color="#00afff"/><stop offset="0.33" stop-color="#9e8eff"/><stop offset="0.395" stop-color="#fc77ff"/><stop offset="0.45" stop-color="#ff4bc3"/><stop offset="0.52" stop-color="#ff2894"/><stop offset="0.625" stop-color="#ff066a"/><stop offset="0.67" stop-color="#ff005e"/><stop offset="0.87" stop-color="#ff003c"/><stop offset="1" stop-color="#ff002f"/></linearGradient>
<linearGradient id="bg31" gradientUnits="userSpaceOnUse" x1="504" x2="702"><stop offset="0" stop-color="#00e0ff"/><stop offset="0.202" stop-color="#00acff"/><stop offset="0.222" stop-color="#00a6ff"/><stop offset="0.404" stop-color="#ff6cff"/><stop offset="0.449" stop-color="#ff48cc"/><stop offset="0.515" stop-color="#ff289d"/><stop offset="0.616" stop-color="#ff0772"/><stop offset="0.662" stop-color="#ff0065"/><stop offset="0.854" stop-color="#ff0042"/><stop offset="1" stop-color="#ff0032"/></linearGradient>
<linearGradient id="bg32" gradientUnits="userSpaceOnUse" x1="505" x2="700"><stop offset="0" stop-color="#00d5ff"/><stop offset="0.205" stop-color="#00a2ff"/><stop offset="0.226" stop-color="#029dff"/><stop offset="0.303" stop-color="#6e86ff"/><stop offset="0.415" stop-color="#ff60fc"/><stop offset="0.467" stop-color="#ff3dc7"/><stop offset="0.538" stop-color="#ff1e99"/><stop offset="0.646" stop-color="#ff0070"/><stop offset="0.821" stop-color="#ff004b"/><stop offset="1" stop-color="#ff0036"/></linearGradient>
<linearGradient id="bg33" gradientUnits="userSpaceOnUse" x1="505" x2="698"><stop offset="0" stop-color="#00cdff"/><stop offset="0.207" stop-color="#009bff"/><stop offset="0.228" stop-color="#0095ff"/><stop offset="0.301" stop-color="#6280ff"/><stop offset="0.425" stop-color="#fe59ff"/><stop offset="0.482" stop-color="#ff36c7"/><stop offset="0.56" stop-color="#ff1798"/><stop offset="0.648" stop-color="#ff0076"/><stop offset="0.819" stop-color="#ff0050"/><stop offset="1" stop-color="#ff0039"/></linearGradient>
<linearGradient id="bg34" gradientUnits="userSpaceOnUse" x1="506" x2="697"><stop offset="0" stop-color="#00c4ff"/><stop offset="0.209" stop-color="#0092ff"/><stop offset="0.225" stop-color="#008eff"/><stop offset="0.346" stop-color="#966cff"/><stop offset="0.435" stop-color="#ff4ffd"/><stop offset="0.487" stop-color="#ff31cb"/><stop offset="0.565" stop-color="#ff139b"/><stop offset="0.644" stop-color="#ff007d"/><stop offset="0.806" stop-color="#ff0056"/><stop offset="1" stop-color="#ff003d"/></linearGradient>
<linearGradient id="bg35" gradientUnits="userSpaceOnUse" x1="507" x2="695"><stop offset="0" stop-color="#0bf"/><stop offset="0.213" stop-color="#008aff"/><stop offset="0.229" stop-color="#0486ff"/><stop offset="0.33" stop-color="#7e6aff"/><stop offset="0.441" stop-color="#fd48ff"/><stop offset="0.505" stop-color="#ff28c7"/><stop offset="0.59" stop-color="#ff0b97"/><stop offset="0.638" stop-color="#ff0085"/><stop offset="0.793" stop-color="#ff005e"/><stop offset="1" stop-color="#ff0041"/></linearGradient>
<linearGradient id="bg36" gradientUnits="userSpaceOnUse" x1="507" x2="694"><stop offset="0" stop-color="#00b4ff"/><stop offset="0.214" stop-color="#0083ff"/><stop offset="0.23" stop-color="#027fff"/><stop offset="0.321" stop-color="#6d68ff"/><stop offset="0.455" stop-color="#ff40fe"/><stop offset="0.513" stop-color="#ff23ca"/><stop offset="0.599" stop-color="#ff079b"/><stop offset="0.642" stop-color="#ff008a"/><stop offset="0.797" stop-color="#ff0062"/><stop offset="1" stop-color="#f04"/></linearGradient>
<linearGradient id="bg37" gradientUnits="userSpaceOnUse" x1="508" x2="692"><stop offset="0" stop-color="#00acff"/><stop offset="0.217" stop-color="#007cff"/><stop offset="0.228" stop-color="#007aff"/><stop offset="0.321" stop-color="#6862ff"/><stop offset="0.467" stop-color="#ff37fc"/><stop offset="0.533" stop-color="#ff1bc6"/><stop offset="0.625" stop-color="#ff0097"/><stop offset="0.766" stop-color="#ff006d"/><stop offset="0.984" stop-color="#ff004a"/><stop offset="1" stop-color="#ff0048"/></linearGradient>
<linearGradient id="bg38" gradientUnits="userSpaceOnUse" x1="509" x2="691"><stop offset="0" stop-color="#00a4ff"/><stop offset="0.22" stop-color="#0075ff"/><stop offset="0.231" stop-color="#0673ff"/><stop offset="0.357" stop-color="#8b53ff"/><stop offset="0.473" stop-color="#ff32ff"/><stop offset="0.538" stop-color="#ff17ca"/><stop offset="0.621" stop-color="#ff009f"/><stop offset="0.758" stop-color="#ff0074"/><stop offset="0.978" stop-color="#ff004e"/><stop offset="1" stop-color="#ff004c"/></linearGradient>
<linearGradient id="bg39" gradientUnits="userSpaceOnUse" x1="510" x2="689"><stop offset="0" stop-color="#009dff"/><stop offset="0.223" stop-color="#006fff"/><stop offset="0.447" stop-color="#db36ff"/><stop offset="0.486" stop-color="#ff2afd"/><stop offset="0.553" stop-color="#ff11ca"/><stop offset="0.62" stop-color="#ff00a7"/><stop offset="0.754" stop-color="#ff007b"/><stop offset="0.966" stop-color="#ff0054"/><stop offset="1" stop-color="#ff0050"/></linearGradient>
<linearGradient id="bg40" gradientUnits="userSpaceOnUse" x1="510" x2="688"><stop offset="0" stop-color="#0098ff"/><stop offset="0.225" stop-color="#006aff"/><stop offset="0.236" stop-color="#0867ff"/><stop offset="0.399" stop-color="#a540ff"/><stop offset="0.494" stop-color="#fe25ff"/><stop offset="0.573" stop-color="#ff09c6"/><stop offset="0.618" stop-color="#ff00af"/><stop offset="0.747" stop-color="#ff0082"/><stop offset="0.949" stop-color="#ff005a"/><stop offset="1" stop-color="#ff0053"/></linearGradient>
<linearGradient id="bg41" gradientUnits="userSpaceOnUse" x1="511" x2="686"><stop offset="0" stop-color="#0091ff"/><stop offset="0.229" stop-color="#0064ff"/><stop offset="0.337" stop-color="#684bff"/><stop offset="0.509" stop-color="#ff1efe"/><stop offset="0.583" stop-color="#ff05c9"/><stop offset="0.629" stop-color="#ff00b2"/><stop offset="0.76" stop-color="#ff0085"/><stop offset="0.96" stop-color="#ff005d"/><stop offset="1" stop-color="#ff0058"/></linearGradient>
<linearGradient id="bg42" gradientUnits="userSpaceOnUse" x1="512" x2="685"><stop offset="0" stop-color="#008bff"/><stop offset="0.225" stop-color="#005fff"/><stop offset="0.387" stop-color="#903aff"/><stop offset="0.52" stop-color="#ff17fc"/><stop offset="0.595" stop-color="#ff00c9"/><stop offset="0.705" stop-color="#ff009a"/><stop offset="0.873" stop-color="#ff0070"/><stop offset="1" stop-color="#ff005c"/></linearGradient>
<linearGradient id="bg43" gradientUnits="userSpaceOnUse" x1="513" x2="683"><stop offset="0" stop-color="#0085ff"/><stop offset="0.229" stop-color="#035aff"/><stop offset="0.365" stop-color="#783cff"/><stop offset="0.529" stop-color="#ff12ff"/><stop offset="0.594" stop-color="#ff00d3"/><stop offset="0.7" stop-color="#ff00a3"/><stop offset="0.859" stop-color="#ff0078"/><stop offset="1" stop-color="#ff0060"/></linearGradient>
<linearGradient id="bg44" gradientUnits="userSpaceOnUse" x1="513" x2="682"><stop offset="0" stop-color="#0080ff"/><stop offset="0.231" stop-color="#0156ff"/><stop offset="0.349" stop-color="#663dff"/><stop offset="0.544" stop-color="#ff0cfd"/><stop offset="0.592" stop-color="#ff00dc"/><stop offset="0.698" stop-color="#f0a"/><stop offset="0.852" stop-color="#ff007e"/><stop offset="1" stop-color="#ff0064"/></linearGradient>
<linearGradient id="bg45" gradientUnits="userSpaceOnUse" x1="514" x2="680"><stop offset="0" stop-color="#007bff"/><stop offset="0.229" stop-color="#0052ff"/><stop offset="0.361" stop-color="#6c36ff"/><stop offset="0.554" stop-color="#fe07ff"/><stop offset="0.596" stop-color="#ff00e3"/><stop offset="0.699" stop-color="#ff00b1"/><stop offset="0.849" stop-color="#ff0085"/><stop offset="1" stop-color="#ff0069"/></linearGradient>
<linearGradient id="bg46" gradientUnits="userSpaceOnUse" x1="515" x2="679"><stop offset="0" stop-color="#0075ff"/><stop offset="0.226" stop-color="#004eff"/><stop offset="0.415" stop-color="#9127ff"/><stop offset="0.567" stop-color="#ff00fe"/><stop offset="0.659" stop-color="#ff00c8"/><stop offset="0.787" stop-color="#ff009a"/><stop offset="0.982" stop-color="#ff0070"/><stop offset="1" stop-color="#ff006d"/></linearGradient>
<linearGradient id="bg47" gradientUnits="userSpaceOnUse" x1="516" x2="677"><stop offset="0" stop-color="#0070ff"/><stop offset="0.23" stop-color="#0349ff"/><stop offset="0.385" stop-color="#772bff"/><stop offset="0.571" stop-color="#f900ff"/><stop offset="0.596" stop-color="#ff00f4"/><stop offset="0.696" stop-color="#ff00c0"/><stop offset="0.839" stop-color="#ff0092"/><stop offset="1" stop-color="#ff0072"/></linearGradient>
<linearGradient id="bg48" gradientUnits="userSpaceOnUse" x1="517" x2="675"><stop offset="0" stop-color="#006bff"/><stop offset="0.228" stop-color="#0146ff"/><stop offset="0.367" stop-color="#662cff"/><stop offset="0.57" stop-color="#e0f"/><stop offset="0.595" stop-color="#f0f"/><stop offset="0.69" stop-color="#ff00cb"/><stop offset="0.829" stop-color="#ff009b"/><stop offset="1" stop-color="#f07"/></linearGradient>
<linearGradient id="bg49" gradientUnits="userSpaceOnUse" x1="517" x2="674"><stop offset="0" stop-color="#0068ff"/><stop offset="0.229" stop-color="#0043ff"/><stop offset="0.382" stop-color="#6b26ff"/><stop offset="0.561" stop-color="#e000ff"/><stop offset="0.611" stop-color="#ff00fd"/><stop offset="0.713" stop-color="#ff00c8"/><stop offset="0.86" stop-color="#f09"/><stop offset="1" stop-color="#ff007c"/></linearGradient>
<linearGradient id="bg50" gradientUnits="userSpaceOnUse" x1="518" x2="672"><stop offset="0" stop-color="#0063ff"/><stop offset="0.227" stop-color="#003fff"/><stop offset="0.442" stop-color="#8d18ff"/><stop offset="0.558" stop-color="#d600ff"/><stop offset="0.623" stop-color="#f0f"/><stop offset="0.734" stop-color="#ff00c8"/><stop offset="0.89" stop-color="#ff0098"/><stop offset="1" stop-color="#ff0081"/></linearGradient>
<linearGradient id="bg51" gradientUnits="userSpaceOnUse" x1="519" x2="671"><stop offset="0" stop-color="#005fff"/><stop offset="0.23" stop-color="#023bff"/><stop offset="0.401" stop-color="#711dff"/><stop offset="0.546" stop-color="#c800ff"/><stop offset="0.638" stop-color="#ff00fe"/><stop offset="0.743" stop-color="#ff00ca"/><stop offset="0.901" stop-color="#ff009a"/><stop offset="1" stop-color="#ff0086"/></linearGradient>
<linearGradient id="bg52" gradientUnits="userSpaceOnUse" x1="520" x2="669"><stop offset="0" stop-color="#005aff"/><stop offset="0.228" stop-color="#0138ff"/><stop offset="0.389" stop-color="#661dff"/><stop offset="0.544" stop-color="#bf00ff"/><stop offset="0.658" stop-color="#ff00fc"/><stop offset="0.772" stop-color="#ff00c8"/><stop offset="0.94" stop-color="#ff0098"/><stop offset="1" stop-color="#ff008b"/></linearGradient>
<linearGradient id="bg53" gradientUnits="userSpaceOnUse" x1="521" x2="668"><stop offset="0" stop-color="#0056ff"/><stop offset="0.224" stop-color="#0036ff"/><stop offset="0.408" stop-color="#6f17ff"/><stop offset="0.531" stop-color="#b300ff"/><stop offset="0.667" stop-color="#ff00fe"/><stop offset="0.782" stop-color="#ff00ca"/><stop offset="0.952" stop-color="#ff009a"/><stop offset="1" stop-color="#ff0090"/></linearGradient>
<linearGradient id="bg54" gradientUnits="userSpaceOnUse" x1="522" x2="666"><stop offset="0" stop-color="#0052ff"/><stop offset="0.222" stop-color="#03f"/><stop offset="0.472" stop-color="#8d09ff"/><stop offset="0.535" stop-color="#af00ff"/><stop offset="0.688" stop-color="#ff00fd"/><stop offset="0.812" stop-color="#ff00c8"/><stop offset="0.993" stop-color="#ff0098"/><stop offset="1" stop-color="#ff0096"/></linearGradient>
<linearGradient id="bg55" gradientUnits="userSpaceOnUse" x1="523" x2="665"><stop offset="0" stop-color="#004eff"/><stop offset="0.225" stop-color="#022fff"/><stop offset="0.423" stop-color="#7010ff"/><stop offset="0.514" stop-color="#a000ff"/><stop offset="0.697" stop-color="#f0f"/><stop offset="0.824" stop-color="#ff00ca"/><stop offset="1" stop-color="#ff009b"/></linearGradient>
<linearGradient id="bg56" gradientUnits="userSpaceOnUse" x1="524" x2="663"><stop offset="0" stop-color="#004bff"/><stop offset="0.223" stop-color="#012dff"/><stop offset="0.403" stop-color="#6211ff"/><stop offset="0.511" stop-color="#9800ff"/><stop offset="0.719" stop-color="#ff00fe"/><stop offset="0.849" stop-color="#ff00ca"/><stop offset="1" stop-color="#ff00a2"/></linearGradient>
<linearGradient id="bg57" gradientUnits="userSpaceOnUse" x1="525" x2="662"><stop offset="0" stop-color="#0047ff"/><stop offset="0.219" stop-color="#002aff"/><stop offset="0.431" stop-color="#6e0aff"/><stop offset="0.504" stop-color="#9100ff"/><stop offset="0.737" stop-color="#ff00fc"/><stop offset="0.876" stop-color="#ff00c7"/><stop offset="1" stop-color="#ff00a7"/></linearGradient>
<linearGradient id="bg58" gradientUnits="userSpaceOnUse" x1="526" x2="660"><stop offset="0" stop-color="#0043ff"/><stop offset="0.224" stop-color="#0327ff"/><stop offset="0.463" stop-color="#7902ff"/><stop offset="0.754" stop-color="#ff00fe"/><stop offset="0.896" stop-color="#ff00c9"/><stop offset="1" stop-color="#ff00ae"/></linearGradient>
<linearGradient id="bg59" gradientUnits="userSpaceOnUse" x1="526" x2="659"><stop offset="0" stop-color="#0041ff"/><stop offset="0.226" stop-color="#0225ff"/><stop offset="0.451" stop-color="#6f03ff"/><stop offset="0.752" stop-color="#f700ff"/><stop offset="0.782" stop-color="#ff00f9"/><stop offset="0.932" stop-color="#ff00c5"/><stop offset="1" stop-color="#ff00b4"/></linearGradient>
<linearGradient id="bg60" gradientUnits="userSpaceOnUse" x1="527" x2="657"><stop offset="0" stop-color="#003eff"/><stop offset="0.223" stop-color="#0023ff"/><stop offset="0.431" stop-color="#6205ff"/><stop offset="0.515" stop-color="#8700ff"/><stop offset="0.792" stop-color="#f0f"/><stop offset="0.946" stop-color="#ff00c9"/><stop offset="1" stop-color="#f0b"/></linearGradient>
<linearGradient id="bg61" gradientUnits="userSpaceOnUse" x1="528" x2="656"><stop offset="0" stop-color="#003aff"/><stop offset="0.219" stop-color="#0020ff"/><stop offset="0.469" stop-color="#7000ff"/><stop offset="0.781" stop-color="#f300ff"/><stop offset="0.82" stop-color="#ff00fa"/><stop offset="0.984" stop-color="#ff00c5"/><stop offset="1" stop-color="#ff00c1"/></linearGradient>
<linearGradient id="bg62" gradientUnits="userSpaceOnUse" x1="529" x2="654"><stop offset="0" stop-color="#0037ff"/><stop offset="0.224" stop-color="#031dff"/><stop offset="0.456" stop-color="#6700ff"/><stop offset="0.776" stop-color="#e800ff"/><stop offset="0.84" stop-color="#ff00fc"/><stop offset="1" stop-color="#ff00c9"/></linearGradient>
<linearGradient id="bg63" gradientUnits="userSpaceOnUse" x1="530" x2="652"><stop offset="0" stop-color="#0034ff"/><stop offset="0.221" stop-color="#021bff"/><stop offset="0.451" stop-color="#6200ff"/><stop offset="0.779" stop-color="#e000ff"/><stop offset="0.861" stop-color="#ff00fe"/><stop offset="1" stop-color="#ff00d1"/></linearGradient>
<linearGradient id="bg64" gradientUnits="userSpaceOnUse" x1="531" x2="651"><stop offset="0" stop-color="#0031ff"/><stop offset="0.217" stop-color="#0019ff"/><stop offset="0.433" stop-color="#5900ff"/><stop offset="0.767" stop-color="#d500ff"/><stop offset="0.883" stop-color="#ff00fd"/><stop offset="1" stop-color="#ff00d8"/></linearGradient>
<linearGradient id="bg65" gradientUnits="userSpaceOnUse" x1="532" x2="649"><stop offset="0" stop-color="#002eff"/><stop offset="0.214" stop-color="#0018ff"/><stop offset="0.427" stop-color="#5400ff"/><stop offset="0.769" stop-color="#ce00ff"/><stop offset="0.906" stop-color="#f0f"/><stop offset="1" stop-color="#ff00e1"/></linearGradient>
<linearGradient id="bg66" gradientUnits="userSpaceOnUse" x1="533" x2="648"><stop offset="0" stop-color="#002bff"/><stop offset="0.217" stop-color="#0315ff"/><stop offset="0.409" stop-color="#4b00ff"/><stop offset="0.757" stop-color="#c400ff"/><stop offset="0.93" stop-color="#ff00fd"/><stop offset="1" stop-color="#ff00e7"/></linearGradient>
<linearGradient id="bg67" gradientUnits="userSpaceOnUse" x1="534" x2="646"><stop offset="0" stop-color="#0028ff"/><stop offset="0.214" stop-color="#0113ff"/><stop offset="0.402" stop-color="#4700ff"/><stop offset="0.759" stop-color="#bd00ff"/><stop offset="0.964" stop-color="#ff00fc"/><stop offset="1" stop-color="#ff00f1"/></linearGradient>
<linearGradient id="bg68" gradientUnits="userSpaceOnUse" x1="535" x2="645"><stop offset="0" stop-color="#0026ff"/><stop offset="0.209" stop-color="#01f"/><stop offset="0.382" stop-color="#3f00ff"/><stop offset="0.745" stop-color="#b400ff"/><stop offset="0.982" stop-color="#ff00fe"/><stop offset="1" stop-color="#ff00f8"/></linearGradient>
<linearGradient id="bg69" gradientUnits="userSpaceOnUse" x1="536" x2="643"><stop offset="0" stop-color="#0023ff"/><stop offset="0.206" stop-color="#000fff"/><stop offset="0.374" stop-color="#3a00ff"/><stop offset="0.748" stop-color="#ae00ff"/><stop offset="1" stop-color="#fc00ff"/></linearGradient>
<linearGradient id="bg70" gradientUnits="userSpaceOnUse" x1="537" x2="642"><stop offset="0" stop-color="#0020ff"/><stop offset="0.21" stop-color="#020dff"/><stop offset="0.352" stop-color="#30f"/><stop offset="0.733" stop-color="#a500ff"/><stop offset="1" stop-color="#f400ff"/></linearGradient>
<linearGradient id="bg71" gradientUnits="userSpaceOnUse" x1="539" x2="640"><stop offset="0" stop-color="#001dff"/><stop offset="0.198" stop-color="#010bff"/><stop offset="0.337" stop-color="#2e00ff"/><stop offset="0.733" stop-color="#9f00ff"/><stop offset="1" stop-color="#ea00ff"/></linearGradient>
<linearGradient id="bg72" gradientUnits="userSpaceOnUse" x1="540" x2="639"><stop offset="0" stop-color="#001aff"/><stop offset="0.192" stop-color="#0009ff"/><stop offset="0.323" stop-color="#2a00ff"/><stop offset="0.727" stop-color="#90f"/><stop offset="1" stop-color="#e300ff"/></linearGradient>
<linearGradient id="bg73" gradientUnits="userSpaceOnUse" x1="541" x2="637"><stop offset="0" stop-color="#0018ff"/><stop offset="0.198" stop-color="#0307ff"/><stop offset="0.312" stop-color="#2600ff"/><stop offset="0.729" stop-color="#9400ff"/><stop offset="1" stop-color="#da00ff"/></linearGradient>
<linearGradient id="bg74" gradientUnits="userSpaceOnUse" x1="542" x2="636"><stop offset="0" stop-color="#0015ff"/><stop offset="0.191" stop-color="#0205ff"/><stop offset="0.319" stop-color="#2700ff"/><stop offset="0.745" stop-color="#9400ff"/><stop offset="1" stop-color="#d400ff"/></linearGradient>
<linearGradient id="bg75" gradientUnits="userSpaceOnUse" x1="543" x2="634"><stop offset="0" stop-color="#0013ff"/><stop offset="0.187" stop-color="#0104ff"/><stop offset="0.484" stop-color="#4f00ff"/><stop offset="0.923" stop-color="#b900ff"/><stop offset="1" stop-color="#cb00ff"/></linearGradient>
<linearGradient id="bg76" gradientUnits="userSpaceOnUse" x1="544" x2="633"><stop offset="0" stop-color="#01f"/><stop offset="0.18" stop-color="#0002ff"/><stop offset="0.562" stop-color="#6000ff"/><stop offset="1" stop-color="#c500ff"/></linearGradient>
<linearGradient id="bg77" gradientUnits="userSpaceOnUse" x1="545" x2="631"><stop offset="0" stop-color="#000eff"/><stop offset="0.186" stop-color="#0300ff"/><stop offset="0.651" stop-color="#7000ff"/><stop offset="1" stop-color="#bd00ff"/></linearGradient>
<linearGradient id="bg78" gradientUnits="userSpaceOnUse" x1="547" x2="629"><stop offset="0" stop-color="#000bff"/><stop offset="0.171" stop-color="#0200ff"/><stop offset="0.659" stop-color="#6e00ff"/><stop offset="1" stop-color="#b500ff"/></linearGradient>
<linearGradient id="bg79" gradientUnits="userSpaceOnUse" x1="548" x2="628"><stop offset="0" stop-color="#0009ff"/><stop offset="0.163" stop-color="#0100ff"/><stop offset="0.637" stop-color="#6700ff"/><stop offset="1" stop-color="#af00ff"/></linearGradient>
<linearGradient id="bg80" gradientUnits="userSpaceOnUse" x1="549" x2="626"><stop offset="0" stop-color="#0006ff"/><stop offset="0.156" stop-color="#00f"/><stop offset="0.623" stop-color="#6000ff"/><stop offset="1" stop-color="#a700ff"/></linearGradient>
<linearGradient id="bg81" gradientUnits="userSpaceOnUse" x1="550" x2="625"><stop offset="0" stop-color="#0004ff"/><stop offset="0.16" stop-color="#0300ff"/><stop offset="0.693" stop-color="#6b00ff"/><stop offset="1" stop-color="#a200ff"/></linearGradient>
<linearGradient id="bg82" gradientUnits="userSpaceOnUse" x1="552" x2="623"><stop offset="0" stop-color="#00f"/><stop offset="0.141" stop-color="#0200ff"/><stop offset="0.704" stop-color="#6900ff"/><stop offset="1" stop-color="#9b00ff"/></linearGradient>
<linearGradient id="bg83" gradientUnits="userSpaceOnUse" x1="553" x2="622"><stop offset="0" stop-color="#00f"/><stop offset="0.13" stop-color="#0100ff"/><stop offset="0.71" stop-color="#6700ff"/><stop offset="1" stop-color="#9600ff"/></linearGradient>
<linearGradient id="bg84" gradientUnits="userSpaceOnUse" x1="554" x2="620"><stop offset="0" stop-color="#00f"/><stop offset="0.136" stop-color="#0300ff"/><stop offset="0.742" stop-color="#6700ff"/><stop offset="1" stop-color="#8f00ff"/></linearGradient>
<linearGradient id="bg85" gradientUnits="userSpaceOnUse" x1="556" x2="619"><stop offset="0" stop-color="#00f"/><stop offset="0.111" stop-color="#0200ff"/><stop offset="0.746" stop-color="#60f"/><stop offset="1" stop-color="#8b00ff"/></linearGradient>
<linearGradient id="bg86" gradientUnits="userSpaceOnUse" x1="557" x2="617"><stop offset="0" stop-color="#00f"/><stop offset="0.1" stop-color="#0200ff"/><stop offset="0.767" stop-color="#6400ff"/><stop offset="1" stop-color="#8400ff"/></linearGradient>
<linearGradient id="bg87" gradientUnits="userSpaceOnUse" x1="558" x2="616"><stop offset="0" stop-color="#00f"/><stop offset="0.103" stop-color="#0400ff"/><stop offset="0.793" stop-color="#6400ff"/><stop offset="1" stop-color="#8000ff"/></linearGradient>
<linearGradient id="bg88" gradientUnits="userSpaceOnUse" x1="560" x2="614"><stop offset="0" stop-color="#00f"/><stop offset="0.074" stop-color="#0300ff"/><stop offset="0.815" stop-color="#6300ff"/><stop offset="1" stop-color="#7900ff"/></linearGradient>
<linearGradient id="bg89" gradientUnits="userSpaceOnUse" x1="562" x2="613"><stop offset="0" stop-color="#00f"/><stop offset="0.784" stop-color="#5d00ff"/><stop offset="1" stop-color="#7500ff"/></linearGradient>
<linearGradient id="bg90" gradientUnits="userSpaceOnUse" x1="563" x2="611"><stop offset="0" stop-color="#00f"/><stop offset="0.833" stop-color="#5d00ff"/><stop offset="1" stop-color="#6f00ff"/></linearGradient>
<linearGradient id="bg91" gradientUnits="userSpaceOnUse" x1="565" x2="610"><stop offset="0" stop-color="#0400ff"/><stop offset="0.889" stop-color="#6000ff"/><stop offset="1" stop-color="#6b00ff"/></linearGradient>
<linearGradient id="bg92" gradientUnits="userSpaceOnUse" x1="567" x2="608"><stop offset="0" stop-color="#0900ff"/><stop offset="0.976" stop-color="#6300ff"/><stop offset="1" stop-color="#6500ff"/></linearGradient>
<linearGradient id="bg93" gradientUnits="userSpaceOnUse" x1="568" x2="606"><stop offset="0" stop-color="#0a00ff"/><stop offset="1" stop-color="#5f00ff"/></linearGradient>
<linearGradient id="bg94" gradientUnits="userSpaceOnUse" x1="570" x2="605"><stop offset="0" stop-color="#0f00ff"/><stop offset="1" stop-color="#5c00ff"/></linearGradient>
<linearGradient id="bg95" gradientUnits="userSpaceOnUse" x1="572" x2="603"><stop offset="0" stop-color="#1300ff"/><stop offset="1" stop-color="#5600ff"/></linearGradient>
<linearGradient id="bg96" gradientUnits="userSpaceOnUse" x1="574" x2="602"><stop offset="0" stop-color="#1600ff"/><stop offset="1" stop-color="#5200ff"/></linearGradient>
<linearGradient id="bg97" gradientUnits="userSpaceOnUse" x1="576" x2="600"><stop offset="0" stop-color="#1a00ff"/><stop offset="1" stop-color="#4d00ff"/></linearGradient>
<linearGradient id="bg98" gradientUnits="userSpaceOnUse" x1="578" x2="599"><stop offset="0" stop-color="#1e00ff"/><stop offset="1" stop-color="#4a00ff"/></linearGradient>
<linearGradient id="bg99" gradientUnits="userSpaceOnUse" x1="580" x2="597"><stop offset="0" stop-color="#2100ff"/><stop offset="1" stop-color="#40f"/></linearGradient>
<linearGradient id="bg100" gradientUnits="userSpaceOnUse" x1="582" x2="596"><stop offset="0" stop-color="#2500ff"/><stop offset="1" stop-color="#4100ff"/></linearGradient>
<linearGradient id="bg101" gradientUnits="userSpaceOnUse" x1="584" x2="594"><stop offset="0" stop-color="#2800ff"/><stop offset="1" stop-color="#3c00ff"/></linearGradient>
<linearGradient id="bg102" gradientUnits="userSpaceOnUse" x1="586" x2="593"><stop offset="0" stop-color="#2b00ff"/><stop offset="1" stop-color="#3900ff"/></linearGradient>
</defs>
<g clip-path="url(#bp)"><g clip-path="url(#bh)">
<rect x="503" y="28" width="30" height="2.5" fill="url(#bg0)"/>
<rect x="499" y="30" width="50" height="2.5" fill="url(#bg1)"/>
<rect x="498" y="32" width="65" height="2.5" fill="url(#bg2)"/>
<rect x="496.3" y="34" width="80.7" height="2.5" fill="url(#bg3)"/>
<rect x="496.3" y="36" width="94.7" height="2.5" fill="url(#bg4)"/>
<rect x="496.3" y="38" width="108.7" height="2.5" fill="url(#bg5)"/>
<rect x="496.3" y="40" width="121.7" height="2.5" fill="url(#bg6)"/>
<rect x="496.3" y="42" width="135.7" height="2.5" fill="url(#bg7)"/>
<rect x="496.3" y="44" width="149.7" height="2.5" fill="url(#bg8)"/>
<rect x="496.3" y="46" width="163.7" height="2.5" fill="url(#bg9)"/>
<rect x="496.3" y="48" width="176.7" height="2.5" fill="url(#bg10)"/>
<rect x="496.3" y="50" width="190.7" height="2.5" fill="url(#bg11)"/>
<rect x="496.3" y="52" width="204.7" height="2.5" fill="url(#bg12)"/>
<rect x="496.3" y="54" width="217.7" height="2.5" fill="url(#bg13)"/>
<rect x="496.3" y="56" width="220.1" height="2.5" fill="url(#bg14)"/>
<rect x="496.3" y="58" width="220.1" height="2.5" fill="url(#bg15)"/>
<rect x="496.3" y="60" width="220.1" height="2.5" fill="url(#bg16)"/>
<rect x="497" y="62" width="219.4" height="2.5" fill="url(#bg17)"/>
<rect x="497" y="64" width="219.4" height="2.5" fill="url(#bg18)"/>
<rect x="498" y="66" width="218.4" height="2.5" fill="url(#bg19)"/>
<rect x="498" y="68" width="218.4" height="2.5" fill="url(#bg20)"/>
<rect x="498" y="70" width="218.4" height="2.5" fill="url(#bg21)"/>
<rect x="499" y="72" width="216" height="2.5" fill="url(#bg22)"/>
<rect x="499" y="74" width="215" height="2.5" fill="url(#bg23)"/>
<rect x="500" y="76" width="212" height="2.5" fill="url(#bg24)"/>
<rect x="501" y="78" width="210" height="2.5" fill="url(#bg25)"/>
<rect x="501" y="80" width="208" height="2.5" fill="url(#bg26)"/>
<rect x="502" y="82" width="206" height="2.5" fill="url(#bg27)"/>
<rect x="502" y="84" width="204" height="2.5" fill="url(#bg28)"/>
<rect x="503" y="86" width="202" height="2.5" fill="url(#bg29)"/>
<rect x="503" y="88" width="200" height="2.5" fill="url(#bg30)"/>
<rect x="504" y="90" width="198" height="2.5" fill="url(#bg31)"/>
<rect x="505" y="92" width="195" height="2.5" fill="url(#bg32)"/>
<rect x="505" y="94" width="193" height="2.5" fill="url(#bg33)"/>
<rect x="506" y="96" width="191" height="2.5" fill="url(#bg34)"/>
<rect x="507" y="98" width="188" height="2.5" fill="url(#bg35)"/>
<rect x="507" y="100" width="187" height="2.5" fill="url(#bg36)"/>
<rect x="508" y="102" width="184" height="2.5" fill="url(#bg37)"/>
<rect x="509" y="104" width="182" height="2.5" fill="url(#bg38)"/>
<rect x="510" y="106" width="179" height="2.5" fill="url(#bg39)"/>
<rect x="510" y="108" width="178" height="2.5" fill="url(#bg40)"/>
<rect x="511" y="110" width="175" height="2.5" fill="url(#bg41)"/>
<rect x="512" y="112" width="173" height="2.5" fill="url(#bg42)"/>
<rect x="513" y="114" width="170" height="2.5" fill="url(#bg43)"/>
<rect x="513" y="116" width="169" height="2.5" fill="url(#bg44)"/>
<rect x="514" y="118" width="166" height="2.5" fill="url(#bg45)"/>
<rect x="515" y="120" width="164" height="2.5" fill="url(#bg46)"/>
<rect x="516" y="122" width="161" height="2.5" fill="url(#bg47)"/>
<rect x="517" y="124" width="158" height="2.5" fill="url(#bg48)"/>
<rect x="517" y="126" width="157" height="2.5" fill="url(#bg49)"/>
<rect x="518" y="128" width="154" height="2.5" fill="url(#bg50)"/>
<rect x="519" y="130" width="152" height="2.5" fill="url(#bg51)"/>
<rect x="520" y="132" width="149" height="2.5" fill="url(#bg52)"/>
<rect x="521" y="134" width="147" height="2.5" fill="url(#bg53)"/>
<rect x="522" y="136" width="144" height="2.5" fill="url(#bg54)"/>
<rect x="523" y="138" width="142" height="2.5" fill="url(#bg55)"/>
<rect x="524" y="140" width="139" height="2.5" fill="url(#bg56)"/>
<rect x="525" y="142" width="137" height="2.5" fill="url(#bg57)"/>
<rect x="526" y="144" width="134" height="2.5" fill="url(#bg58)"/>
<rect x="526" y="146" width="133" height="2.5" fill="url(#bg59)"/>
<rect x="527" y="148" width="130" height="2.5" fill="url(#bg60)"/>
<rect x="528" y="150" width="128" height="2.5" fill="url(#bg61)"/>
<rect x="529" y="152" width="125" height="2.5" fill="url(#bg62)"/>
<rect x="530" y="154" width="122" height="2.5" fill="url(#bg63)"/>
<rect x="531" y="156" width="120" height="2.5" fill="url(#bg64)"/>
<rect x="532" y="158" width="117" height="2.5" fill="url(#bg65)"/>
<rect x="533" y="160" width="115" height="2.5" fill="url(#bg66)"/>
<rect x="534" y="162" width="112" height="2.5" fill="url(#bg67)"/>
<rect x="535" y="164" width="110" height="2.5" fill="url(#bg68)"/>
<rect x="536" y="166" width="107" height="2.5" fill="url(#bg69)"/>
<rect x="537" y="168" width="105" height="2.5" fill="url(#bg70)"/>
<rect x="539" y="170" width="101" height="2.5" fill="url(#bg71)"/>
<rect x="540" y="172" width="99" height="2.5" fill="url(#bg72)"/>
<rect x="541" y="174" width="96" height="2.5" fill="url(#bg73)"/>
<rect x="542" y="176" width="94" height="2.5" fill="url(#bg74)"/>
<rect x="543" y="178" width="91" height="2.5" fill="url(#bg75)"/>
<rect x="544" y="180" width="89" height="2.5" fill="url(#bg76)"/>
<rect x="545" y="182" width="86" height="2.5" fill="url(#bg77)"/>
<rect x="547" y="184" width="82" height="2.5" fill="url(#bg78)"/>
<rect x="548" y="186" width="80" height="2.5" fill="url(#bg79)"/>
<rect x="549" y="188" width="77" height="2.5" fill="url(#bg80)"/>
<rect x="550" y="190" width="75" height="2.5" fill="url(#bg81)"/>
<rect x="552" y="192" width="71" height="2.5" fill="url(#bg82)"/>
<rect x="553" y="194" width="69" height="2.5" fill="url(#bg83)"/>
<rect x="554" y="196" width="66" height="2.5" fill="url(#bg84)"/>
<rect x="556" y="198" width="63" height="2.5" fill="url(#bg85)"/>
<rect x="557" y="200" width="60" height="2.5" fill="url(#bg86)"/>
<rect x="558" y="202" width="58" height="2.5" fill="url(#bg87)"/>
<rect x="560" y="204" width="54" height="2.5" fill="url(#bg88)"/>
<rect x="562" y="206" width="51" height="2.5" fill="url(#bg89)"/>
<rect x="563" y="208" width="48" height="2.5" fill="url(#bg90)"/>
<rect x="565" y="210" width="45" height="2.5" fill="url(#bg91)"/>
<rect x="567" y="212" width="41" height="2.5" fill="url(#bg92)"/>
<rect x="568" y="214" width="38" height="2.5" fill="url(#bg93)"/>
<rect x="570" y="216" width="35" height="2.5" fill="url(#bg94)"/>
<rect x="572" y="218" width="31" height="2.5" fill="url(#bg95)"/>
<rect x="574" y="220" width="28" height="2.5" fill="url(#bg96)"/>
<rect x="576" y="222" width="24" height="2.5" fill="url(#bg97)"/>
<rect x="578" y="224" width="21" height="2.5" fill="url(#bg98)"/>
<rect x="580" y="226" width="17" height="2.5" fill="url(#bg99)"/>
<rect x="582" y="228" width="14" height="2.5" fill="url(#bg100)"/>
<rect x="584" y="230" width="10" height="2.5" fill="url(#bg101)"/>
<rect x="586" y="232" width="7" height="2.5" fill="url(#bg102)"/>
<path d="M590.1,233.4 590.1,233.4 590,233.4 589.9,233.5 589.8,233.6 589.7,233.6 589.6,233.6 589.6,233.6 589.5,233.6 589.4,233.6 589.3,233.6 589.1,233.6 589,233.5 588.8,233.4 588.6,233.4 588.4,233.2 588.3,233.1 588.1,233 587.9,232.8 587.7,232.6 587.5,232.4 587.3,232.2 587,232 586.8,231.8 586.5,231.5 586.2,231.2 585.9,230.9 585.5,230.5 585.1,230.1 584.8,229.7 584.3,229.3 583.9,228.8 583.5,228.3 583,227.8 582.5,227.3 582,226.7 581.5,226.2 580.9,225.6 580.3,225 579.7,224.3 579,223.6 578.3,222.9 577.6,222.1 576.8,221.3 576,220.5 575.2,219.6 574.3,218.7 573.4,217.8 572.5,216.8 571.5,215.8 570.5,214.6 569.4,213.5 568.3,212.2 567.2,211 566,209.6 564.7,208.1 563.5,206.5 562.2,204.9 560.9,203.3 559.4,201.4 557.9,199.2 556.2,196.8 554.4,194.2 552.6,191.4 550.7,188.4 548.7,185.2 546.7,181.7 544.6,178.1 542.4,174.4 540.2,170.3 537.9,166 535.6,161.5 533.3,156.9 530.9,152.2 528.6,147.3 526.2,142.2 523.9,137.1 521.5,131.9 519.2,126.8 517,121.6 514.9,116.4 513,111.3 511.1,106.2 509.3,101.2 507.7,96.4 506.1,91.7 504.7,87.2 503.4,82.8 502.2,78.5 501.1,74.6 500.2,70.9 499.4,67.4 498.6,64 498,60.9 497.5,58 497.1,55.4 496.8,52.9 496.5,50.6 496.4,48.4 496.3,46.4 496.3,44.6 496.4,42.9 496.6,41.3 496.8,39.8 497.1,38.4 497.5,37.2 497.9,36 498.5,35 499,34 499.7,33.2 500.3,32.5 501,31.8 501.8,31.3 502.6,30.8 503.4,30.4 504.3,30.1 505.2,29.8 506.1,29.6 507.1,29.4 508,29.3 509,29.2 510,29.1 511.1,29 512.1,29 513.1,29 514.2,28.9 515.2,28.9 516.3,28.9 517.3,29 518.4,29 519.4,29 520.5,29.1 521.6,29.1 522.7,29.2 523.8,29.3 524.9,29.4 526,29.4 527.2,29.5 528.4,29.7 529.6,29.8 530.8,29.9 532,30 533.3,30.2 534.6,30.3 535.9,30.5 537.2,30.6 538.5,30.8 539.9,31 541.3,31.2 542.8,31.3 544.2,31.5 545.7,31.7 547.3,31.9 548.8,32.1 550.4,32.4 552,32.6 553.7,32.8 555.4,33.1 557.1,33.3 558.9,33.6 560.7,33.8 562.5,34.1 564.4,34.3 566.3,34.6 568.2,34.9 570.2,35.2 572.2,35.5 574.3,35.8 576.4,36.1 578.5,36.4 580.7,36.7 582.9,37 585.2,37.4 587.5,37.7 589.8,38 592.2,38.4 594.6,38.7 597,39.1 599.5,39.5 602,39.8 604.5,40.2 607.1,40.6 609.7,40.9 612.3,41.3 614.9,41.7 617.6,42.1 620.2,42.5 622.9,42.9 625.6,43.3 628.3,43.7 631,44.1 633.6,44.4 636.2,44.8 638.8,45.2 641.4,45.6 644,45.9 646.6,46.3 649.1,46.7 651.7,47.1 654.2,47.4 656.7,47.8 659.1,48.1 661.4,48.5 663.7,48.8 665.9,49.1 668.1,49.5 670.3,49.8 672.4,50.1 674.4,50.4 676.3,50.7 678.3,50.9 680.1,51.2 681.9,51.5 683.6,51.7 685.3,52 686.9,52.2 688.4,52.4 689.9,52.6 691.4,52.9 692.8,53.1 694.1,53.2 695.4,53.4 696.5,53.6 697.6,53.8 698.8,53.9 700.2,54.1 702,54.4 704,54.7 706.1,55 708.1,55.3 709.9,55.6 711.5,55.8 712.9,56 714.1,56.2 715.3,56.3 716.4,56.5 717.3,56.6 718,56.7 718.7,56.8 719.4,56.9 720.2,57 721.1,57.2 722.2,57.3 723.2,57.5 724.1,57.6 724.8,57.7Z M677.8,51.1 532,32.2 560.2,182.7Z" fill="#000" fill-opacity="0.40" fill-rule="evenodd"/>
</g></g>
<rect x="496.3" y="24.5" width="220.1" height="215.2" fill="none" stroke="#8c8c8c" stroke-width="1.2"/>
<g class="ax">
<line x1="493.7" x2="496.3" y1="240" y2="240"/>
<text x="493.1" y="242.8" text-anchor="end">0</text>
<line x1="493.7" x2="496.3" y1="222.1" y2="222.1"/>
<text x="493.1" y="224.9" text-anchor="end">0,05</text>
<line x1="493.7" x2="496.3" y1="204.1" y2="204.1"/>
<text x="493.1" y="206.9" text-anchor="end">0,1</text>
<line x1="493.7" x2="496.3" y1="186.2" y2="186.2"/>
<text x="493.1" y="189" text-anchor="end">0,15</text>
<line x1="493.7" x2="496.3" y1="168.3" y2="168.3"/>
<text x="493.1" y="171.1" text-anchor="end">0,2</text>
<line x1="493.7" x2="496.3" y1="150.4" y2="150.4"/>
<text x="493.1" y="153.2" text-anchor="end">0,25</text>
<line x1="493.7" x2="496.3" y1="132.4" y2="132.4"/>
<text x="493.1" y="135.2" text-anchor="end">0,3</text>
<line x1="493.7" x2="496.3" y1="114.5" y2="114.5"/>
<text x="493.1" y="117.3" text-anchor="end">0,35</text>
<line x1="493.7" x2="496.3" y1="96.6" y2="96.6"/>
<text x="493.1" y="99.4" text-anchor="end">0,4</text>
<line x1="493.7" x2="496.3" y1="78.7" y2="78.7"/>
<text x="493.1" y="81.5" text-anchor="end">0,45</text>
<line x1="493.7" x2="496.3" y1="60.7" y2="60.7"/>
<text x="493.1" y="63.5" text-anchor="end">0,5</text>
<line x1="493.7" x2="496.3" y1="42.8" y2="42.8"/>
<text x="493.1" y="45.6" text-anchor="end">0,55</text>
<line x1="496.4" x2="496.4" y1="239.7" y2="242.7"/>
<text x="496.4" y="250.7" text-anchor="middle">0</text>
<line x1="533.1" x2="533.1" y1="239.7" y2="242.7"/>
<text x="533.1" y="250.7" text-anchor="middle">0,1</text>
<line x1="569.9" x2="569.9" y1="239.7" y2="242.7"/>
<text x="569.9" y="250.7" text-anchor="middle">0,2</text>
<line x1="606.6" x2="606.6" y1="239.7" y2="242.7"/>
<text x="606.6" y="250.7" text-anchor="middle">0,3</text>
<line x1="643.3" x2="643.3" y1="239.7" y2="242.7"/>
<text x="643.3" y="250.7" text-anchor="middle">0,4</text>
<line x1="680.1" x2="680.1" y1="239.7" y2="242.7"/>
<text x="680.1" y="250.7" text-anchor="middle">0,5</text>
</g>
<rect x="565.8" y="68.8" width="5.3" height="5.3" fill="none" stroke="#1a1a1a" stroke-opacity=".75" stroke-width="2.3"/>
<rect x="565.8" y="68.8" width="5.3" height="5.3" fill="none" stroke="#f6f6f6" stroke-width="1.1"/>
<rect x="675.2" y="48.4" width="5.3" height="5.3" fill="none" stroke="#1a1a1a" stroke-opacity=".75" stroke-width="2.3"/>
<rect x="675.2" y="48.4" width="5.3" height="5.3" fill="none" stroke="#f6f6f6" stroke-width="1.1"/>
<rect x="529.4" y="29.6" width="5.3" height="5.3" fill="none" stroke="#1a1a1a" stroke-opacity=".75" stroke-width="2.3"/>
<rect x="529.4" y="29.6" width="5.3" height="5.3" fill="none" stroke="#f6f6f6" stroke-width="1.1"/>
<rect x="557.6" y="180" width="5.3" height="5.3" fill="none" stroke="#1a1a1a" stroke-opacity=".75" stroke-width="2.3"/>
<rect x="557.6" y="180" width="5.3" height="5.3" fill="none" stroke="#f6f6f6" stroke-width="1.1"/>
<rect x="537.7" y="74" width="5.3" height="5.3" fill="none" stroke="#1a1a1a" stroke-opacity=".75" stroke-width="2.3"/>
<rect x="537.7" y="74" width="5.3" height="5.3" fill="none" stroke="#f6f6f6" stroke-width="1.1"/>
<rect x="612.3" y="118.8" width="5.3" height="5.3" fill="none" stroke="#1a1a1a" stroke-opacity=".75" stroke-width="2.3"/>
<rect x="612.3" y="118.8" width="5.3" height="5.3" fill="none" stroke="#f6f6f6" stroke-width="1.1"/>
<rect x="568.3" y="34.6" width="5.3" height="5.3" fill="none" stroke="#1a1a1a" stroke-opacity=".75" stroke-width="2.3"/>
<rect x="568.3" y="34.6" width="5.3" height="5.3" fill="none" stroke="#f6f6f6" stroke-width="1.1"/>
<circle cx="567" cy="71.9" r="2" fill="none" stroke="#151515" stroke-width=".8"/>
<circle cx="678.4" cy="54.5" r="2" fill="none" stroke="#151515" stroke-width=".8"/>
<circle cx="534.3" cy="33.7" r="2" fill="none" stroke="#151515" stroke-width=".8"/>
<circle cx="562.8" cy="183.5" r="2" fill="none" stroke="#151515" stroke-width=".8"/>
<circle cx="542.3" cy="76" r="2" fill="none" stroke="#151515" stroke-width=".8"/>
<circle cx="617.3" cy="128.8" r="2" fill="none" stroke="#151515" stroke-width=".8"/>
<circle cx="568.2" cy="38.6" r="2" fill="none" stroke="#151515" stroke-width=".8"/>
<text class="ct" x="579.6" y="22">CIE 1976 u'v'</text>
</svg>
<div class="abs btn">Measure Gamut Coverage</div>
<div class="abs note">* UHDA-P3 has a slightly different Red primary than DCI-P3</div>
<div class="abs big b1">UHDA-P3 Percent 1931 xy: 90,47</div>
<div class="abs big b2">UHDA-P3 Percent 1976 uv: 93,94</div>

<div class="abs tbl">
<div class="hd"><span style="left:59.8px;width:32.2px">White</span><span style="left:92px;width:32.5px">Red</span><span style="left:124.5px;width:31.9px">Green</span><span style="left:156.4px;width:28.4px">Blue</span><span style="left:184.8px;width:32.1px">Cyan</span><span style="left:216.9px;width:31.9px">Magenta</span><span style="left:248.8px;width:32px">Yellow</span><span style="left:280.8px;width:32px">100W</span></div>
<div class="row d" style="top:12.4px"><span class="lb">Target Y cd/m<sup>2</sup></span><span class="v" style="left:61.8px">854,3095</span><span class="v" style="left:94px">195,9084</span><span class="v" style="left:126.5px">590,7586</span><span class="v" style="left:158.4px">67,6425</span><span class="v" style="left:186.8px">658,4011</span><span class="v" style="left:218.9px">263,5510</span><span class="v" style="left:250.8px">786,6670</span><span class="v" style="left:282.8px">854,3095</span></div>
<div class="row l1" style="top:23.9px"><span class="lb">Y cd/m<sup>2</sup></span><span class="v" style="left:61.8px">854,3095</span><span class="v" style="left:94px">171,5367</span><span class="v" style="left:126.5px">625,3570</span><span class="v" style="left:158.4px">58,3490</span><span class="v" style="left:186.8px">671,7874</span><span class="v" style="left:218.9px">220,2233</span><span class="v" style="left:250.8px">783,3067</span><span class="v" style="left:282.8px">854,3095</span></div>
<div class="row d" style="top:35.4px"><span class="lb">Target x:CIE31</span><span class="v" style="left:61.8px">0,3127</span><span class="v" style="left:94px">0,6786</span><span class="v" style="left:126.5px">0,2650</span><span class="v" style="left:158.4px">0,1500</span><span class="v" style="left:186.8px">0,1996</span><span class="v" style="left:218.9px">0,3362</span><span class="v" style="left:250.8px">0,4376</span><span class="v" style="left:282.8px">0,3127</span></div>
<div class="row l2" style="top:46.9px"><span class="lb">Target y:CIE31</span><span class="v" style="left:61.8px">0,3290</span><span class="v" style="left:94px">0,3196</span><span class="v" style="left:126.5px">0,6900</span><span class="v" style="left:158.4px">0,0600</span><span class="v" style="left:186.8px">0,3319</span><span class="v" style="left:218.9px">0,1514</span><span class="v" style="left:250.8px">0,5355</span><span class="v" style="left:282.8px">0,3290</span></div>
<div class="row d" style="top:58.4px"><span class="lb">x: CIE31</span><span class="v" style="left:61.8px">0,3066</span><span class="v" style="left:94px">0,6645</span><span class="v" style="left:126.5px">0,2728</span><span class="v" style="left:158.4px">0,1548</span><span class="v" style="left:186.8px">0,2084</span><span class="v" style="left:218.9px">0,3289</span><span class="v" style="left:250.8px">0,4199</span><span class="v" style="left:282.8px">0,3066</span></div>
<div class="row l2" style="top:69.9px"><span class="lb">y: CIE31</span><span class="v" style="left:61.8px">0,3281</span><span class="v" style="left:94px">0,3062</span><span class="v" style="left:126.5px">0,6641</span><span class="v" style="left:158.4px">0,0587</span><span class="v" style="left:186.8px">0,3332</span><span class="v" style="left:218.9px">0,1362</span><span class="v" style="left:250.8px">0,5299</span><span class="v" style="left:282.8px">0,3281</span></div>
<div class="sb"><b class="u"></b><i></i><b class="dn"></b></div>
</div>

<div class="abs bar">
<div class="sw sel" style="left:0.6px"><i style="background:#fff"></i><span>White</span></div>
<div class="sw" style="left:71.3px"><i style="background:#f00"></i><span>Red</span></div>
<div class="sw" style="left:142.0px"><i style="background:#0f0"></i><span>Green</span></div>
<div class="sw" style="left:212.7px"><i style="background:#00f"></i><span>Blue</span></div>
<div class="sw" style="left:283.4px"><i style="background:#0ff"></i><span>Cyan</span></div>
<div class="sw" style="left:354.1px"><i style="background:#f0f"></i><span>Magenta</span></div>
<div class="sw" style="left:424.8px"><i style="background:#ff0"></i><span>Yellow</span></div>
<div class="sw" style="left:495.5px"><i style="background:#fff"></i><span>100W</span></div>
<svg class="tbar" style="position:absolute;left:566px;top:0" width="164" height="34" viewBox="566 376 164 34">
<defs><linearGradient id="tg1" x1="0" y1="0" x2="0" y2="1"><stop offset="0" stop-color="#969696"/><stop offset="1" stop-color="#5c5c5c"/></linearGradient><linearGradient id="tg2" x1="0" y1="0" x2="0" y2="1"><stop offset="0" stop-color="#a2a2a2"/><stop offset="1" stop-color="#787878"/></linearGradient><linearGradient id="tg3" x1="0" y1="0" x2="0" y2="1"><stop offset="0" stop-color="#909090"/><stop offset="1" stop-color="#777"/></linearGradient><linearGradient id="tg4" x1="0" y1="0" x2="0" y2="1"><stop offset="0" stop-color="#b4b4b4"/><stop offset="1" stop-color="#8a8a8a"/></linearGradient><linearGradient id="tg5" x1="0" y1="0" x2="0" y2="1"><stop offset="0" stop-color="#a2a2a2"/><stop offset="1" stop-color="#858585"/></linearGradient></defs>
<rect x="566.2" y="379.6" width="24" height="9.9" fill="url(#tg3)"/>
<rect x="566.2" y="379.6" width="24" height="1" fill="#a0a0a0"/>
<rect x="566.2" y="389.8" width="24" height="20.2" fill="#7e7e7e"/>
<rect x="566.2" y="389.8" width="24" height="1" fill="#959595"/>
<circle cx="578.5" cy="383.9" r="3.1" fill="#a4a4a4" stroke="#707070" stroke-width=".6"/>
<path d="M576.7,384.8 L578.5,382.9 L580.3,384.8" fill="none" stroke="#222" stroke-width="1.2"/>
<rect x="570.6" y="392.4" width="15.2" height="14.6" rx="2" fill="#9c9c9c" stroke="#1c1c1c" stroke-width="1.3"/>
<rect x="574.8" y="396.7" width="7.2" height="6.7" fill="#0c0c0c"/>
<rect x="590.8" y="379.6" width="23" height="15.4" fill="url(#tg1)"/>
<rect x="590.8" y="379.6" width="23" height="1" fill="#a8a8a8"/>
<rect x="590.8" y="379.6" width="1" height="15.4" fill="#9a9a9a" fill-opacity=".7"/>
<rect x="613.8" y="379.6" width="23" height="15.4" fill="url(#tg1)"/>
<rect x="613.8" y="379.6" width="23" height="1" fill="#a8a8a8"/>
<rect x="613.8" y="379.6" width="1" height="15.4" fill="#9a9a9a" fill-opacity=".7"/>
<rect x="613.0" y="379.6" width=".8" height="15.4" fill="#4a4a4a" fill-opacity=".7"/>
<rect x="636.8" y="379.6" width="23" height="15.4" fill="url(#tg1)"/>
<rect x="636.8" y="379.6" width="23" height="1" fill="#a8a8a8"/>
<rect x="636.8" y="379.6" width="1" height="15.4" fill="#9a9a9a" fill-opacity=".7"/>
<rect x="636.0" y="379.6" width=".8" height="15.4" fill="#4a4a4a" fill-opacity=".7"/>
<rect x="659.8" y="379.6" width="23" height="15.4" fill="url(#tg1)"/>
<rect x="659.8" y="379.6" width="23" height="1" fill="#a8a8a8"/>
<rect x="659.8" y="379.6" width="1" height="15.4" fill="#9a9a9a" fill-opacity=".7"/>
<rect x="659.0" y="379.6" width=".8" height="15.4" fill="#4a4a4a" fill-opacity=".7"/>
<rect x="682.8" y="379.6" width="23" height="15.4" fill="#3b3b3b"/>
<rect x="682.0" y="379.6" width=".8" height="15.4" fill="#4a4a4a" fill-opacity=".7"/>
<rect x="705.8" y="379.6" width="23" height="15.4" fill="url(#tg1)"/>
<rect x="705.8" y="379.6" width="23" height="1" fill="#a8a8a8"/>
<rect x="705.8" y="379.6" width="1" height="15.4" fill="#9a9a9a" fill-opacity=".7"/>
<circle cx="602.5" cy="387.7" r="4.7" fill="url(#tg4)" stroke="#6a6a6a" stroke-width=".5"/>
<rect x="600.6" y="385.8" width="3.8" height="3.8" fill="#111"/>
<circle cx="625.5" cy="387.7" r="4.7" fill="url(#tg4)" stroke="#6a6a6a" stroke-width=".5"/>
<path d="M624.1,385.3 l4,2.4 l-4,2.4z" fill="#111"/>
<circle cx="648.5" cy="387.7" r="4.7" fill="url(#tg4)" stroke="#6a6a6a" stroke-width=".5"/>
<path d="M646.3,385.0 v5.4 M650.7,385.0 v5.4 M646.3,387.7 h4.4" fill="none" stroke="#333" stroke-width="1"/>
<circle cx="671.5" cy="387.7" r="4.7" fill="url(#tg4)" stroke="#6a6a6a" stroke-width=".5"/>
<ellipse cx="670.0" cy="387.7" rx="1.5" ry="1.2" fill="none" stroke="#444" stroke-width=".8"/>
<ellipse cx="673.0" cy="387.7" rx="1.5" ry="1.2" fill="none" stroke="#444" stroke-width=".8"/>
<circle cx="694.5" cy="387.7" r="4.6" fill="#444"/>
<path d="M697.1,387.7 a2.6,2.6 0 1 1 -1.2,-2.2" fill="none" stroke="#1e1e1e" stroke-width="1.2"/>
<path d="M695.1,384.3 l2.4,-.4 l-1,2.2z" fill="#1e1e1e"/>
<circle cx="717.5" cy="387.7" r="5.2" fill="url(#tg5)" stroke="#6a6a6a" stroke-width=".5"/>
<rect x="590.8" y="395.4" width="69.9" height="14.6" fill="url(#tg2)"/>
<rect x="660.7" y="395.4" width="68.1" height="14.6" fill="url(#tg2)"/>
<rect x="590.8" y="395.2" width="138" height="1" fill="#b4b4b4"/>
<rect x="660.2" y="395.4" width=".9" height="14.6" fill="#5a5a5a"/>
<rect x="590.8" y="395.4" width="1" height="14.6" fill="#aaa" fill-opacity=".6"/>
<circle cx="606.9" cy="403.6" r="4.4" fill="url(#tg4)" stroke="#777" stroke-width=".5"/>
<path d="M608.7,401.6 l-1.7,2 l1.7,2" fill="none" stroke="#4c4c4c" stroke-width=".9"/>
<path d="M606.2,401.6 l-1.7,2 l1.7,2" fill="none" stroke="#4c4c4c" stroke-width=".9"/>
<circle cx="715.2" cy="403.6" r="4.4" fill="url(#tg4)" stroke="#777" stroke-width=".5"/>
<path d="M713.4,401.6 l1.7,2 l-1.7,2" fill="none" stroke="#4c4c4c" stroke-width=".9"/>
<path d="M715.9,401.6 l1.7,2 l-1.7,2" fill="none" stroke="#4c4c4c" stroke-width=".9"/>
<text x="620.1" y="407.1" font-family="Liberation Sans, sans-serif" font-size="11.6" fill="#161616" letter-spacing="-.1">Back</text>
<text x="674.4" y="407.1" font-family="Liberation Sans, sans-serif" font-size="11.6" fill="#161616" letter-spacing=".45">Next</text>
<rect x="728.8" y="376" width="1.2" height="34" fill="#1c1c1c"/>
</svg>
</div>
</body>
</html>
